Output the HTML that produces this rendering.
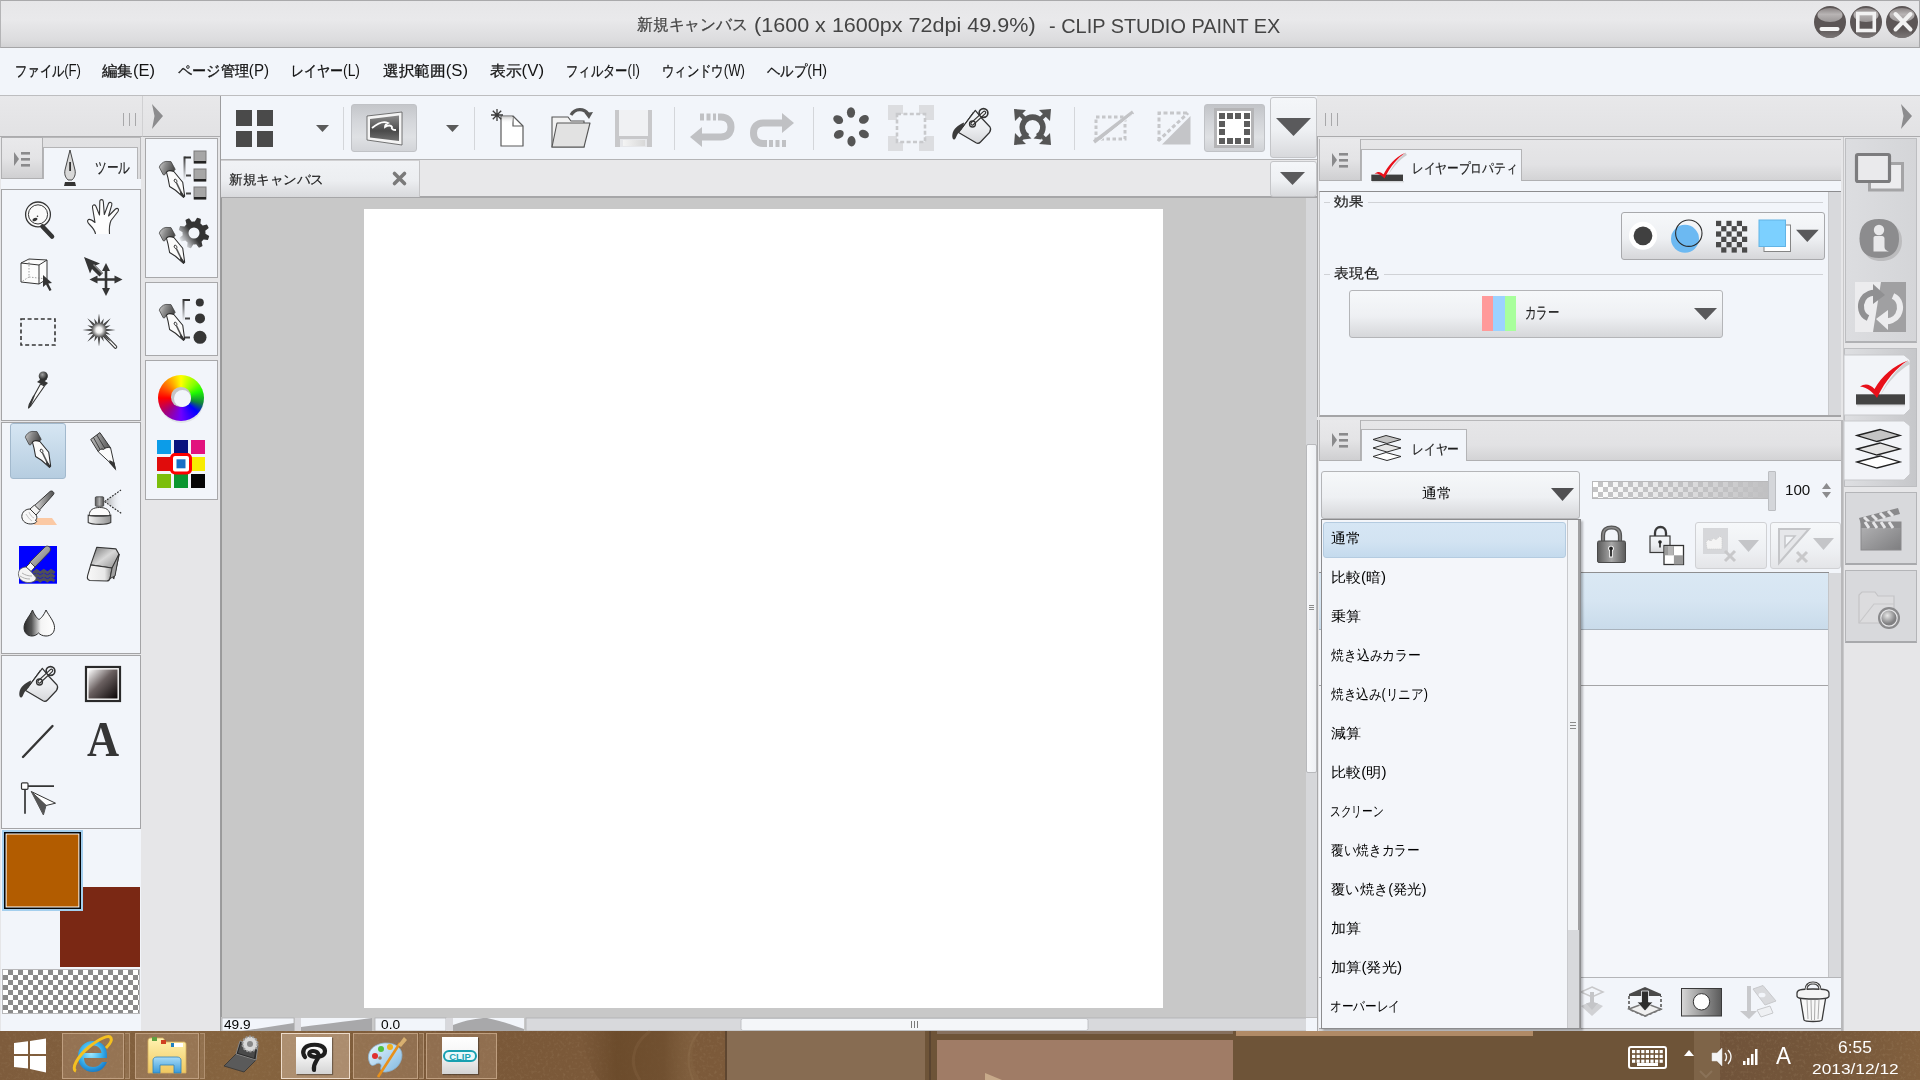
<!DOCTYPE html>
<html><head><meta charset="utf-8">
<style>
*{box-sizing:border-box;margin:0;padding:0}
html,body{width:1920px;height:1080px;overflow:hidden;background:#f2f5fa;font-family:"Liberation Sans",sans-serif;color:#1e1e1e;position:relative}
.a{position:absolute}
.t{white-space:pre}
.s{-webkit-text-stroke:.2px currentColor}
.j{font-size:.88em;line-height:0;-webkit-text-stroke:.3px currentColor}
svg{overflow:visible}
</style></head><body>
<svg width="0" height="0" style="position:absolute">
<defs>
<linearGradient id="gcap" x1="0" y1="0" x2="1" y2="0.3"><stop offset="0" stop-color="#d0d0d0"></stop><stop offset=".45" stop-color="#8a8a8a"></stop><stop offset="1" stop-color="#4a4a4a"></stop></linearGradient>
<linearGradient id="gbtn" x1="0" y1="0" x2="0" y2="1"><stop offset="0" stop-color="#f4f6f9"></stop><stop offset=".55" stop-color="#eceef1"></stop><stop offset="1" stop-color="#d6d7da"></stop></linearGradient>
<linearGradient id="glock" x1="0" y1="0" x2="1" y2="0"><stop offset="0" stop-color="#5a5a5a"></stop><stop offset=".5" stop-color="#a8a8a8"></stop><stop offset="1" stop-color="#5a5a5a"></stop></linearGradient>
<linearGradient id="gdark" x1="0" y1="0" x2="1" y2="0"><stop offset="0" stop-color="#e0e0e0"></stop><stop offset="1" stop-color="#505050"></stop></linearGradient>

</defs></svg>
<div class="a" style="left:0px;top:0px;width:1920px;height:48px;background:linear-gradient(#e6e6e8 0%,#e9e9eb 40%,#dcdcde 85%,#d2d2d4 100%);border-top:1px solid #a9a9ab;border-bottom:1px solid #a5a5a7;border-left:1px solid #b4b4b6;border-right:1px solid #a9a9ab"></div>
<div class="a t s" style="color: rgb(68, 68, 68); -webkit-text-stroke: 0.25px currentcolor; font-size: 15.94px; line-height: 15.94px; top: 16.96px; left: 637.34px; transform: scaleX(0.9875); transform-origin: 0px 0px; white-space: pre;">新規キャンバス</div>
<div class="a t" style="color: rgb(68, 68, 68); font-size: 19.89px; line-height: 19.89px; top: 15.78px; left: 754.31px; transform: scaleX(1.0844); transform-origin: 0px 0px; white-space: pre;">(1600 x 1600px 72dpi 49.9%)</div>
<div class="a t" style="color: rgb(68, 68, 68); font-size: 19.44px; line-height: 19.44px; top: 16.55px; left: 1049.2px; transform: scaleX(1.0248); transform-origin: 0px 0px; white-space: pre;">- CLIP STUDIO PAINT EX</div>
<svg class="a" style="left:1814px;top:6px;" width="32" height="32" viewBox="0 0 32 32"><defs><linearGradient id="gwb" x1="0" y1="0" x2="0" y2="1"><stop offset="0" stop-color="#8a8484"></stop><stop offset=".45" stop-color="#b8b4b4"></stop><stop offset="1" stop-color="#9a9696"></stop></linearGradient><linearGradient id="gwb2" x1="0" y1="0" x2="0" y2="1"><stop offset="0" stop-color="#5a5454"></stop><stop offset="1" stop-color="#8a8686"></stop></linearGradient></defs><circle cx="16" cy="16" r="16" fill="#5c5656"></circle><ellipse cx="16" cy="9" rx="12.5" ry="7" fill="url(#gwb)"></ellipse><ellipse cx="16" cy="27" rx="10" ry="5" fill="url(#gwb2)" opacity=".7"></ellipse><rect x="5.5" y="21" width="20" height="4" rx="2" fill="#f6f6f6"></rect></svg>
<svg class="a" style="left:1850px;top:6px;" width="32" height="32" viewBox="0 0 32 32"><defs><linearGradient id="gwb" x1="0" y1="0" x2="0" y2="1"><stop offset="0" stop-color="#8a8484"></stop><stop offset=".45" stop-color="#b8b4b4"></stop><stop offset="1" stop-color="#9a9696"></stop></linearGradient><linearGradient id="gwb2" x1="0" y1="0" x2="0" y2="1"><stop offset="0" stop-color="#5a5454"></stop><stop offset="1" stop-color="#8a8686"></stop></linearGradient></defs><circle cx="16" cy="16" r="16" fill="#5c5656"></circle><ellipse cx="16" cy="9" rx="12.5" ry="7" fill="url(#gwb)"></ellipse><ellipse cx="16" cy="27" rx="10" ry="5" fill="url(#gwb2)" opacity=".7"></ellipse><rect x="7.8" y="7.5" width="16.5" height="17" fill="none" stroke="#f2f2f2" stroke-width="3.6"></rect></svg>
<svg class="a" style="left:1886px;top:6px;" width="32" height="32" viewBox="0 0 32 32"><defs><linearGradient id="gwb" x1="0" y1="0" x2="0" y2="1"><stop offset="0" stop-color="#8a8484"></stop><stop offset=".45" stop-color="#b8b4b4"></stop><stop offset="1" stop-color="#9a9696"></stop></linearGradient><linearGradient id="gwb2" x1="0" y1="0" x2="0" y2="1"><stop offset="0" stop-color="#5a5454"></stop><stop offset="1" stop-color="#8a8686"></stop></linearGradient></defs><circle cx="16" cy="16" r="16" fill="#5c5656"></circle><ellipse cx="16" cy="9" rx="12.5" ry="7" fill="url(#gwb)"></ellipse><ellipse cx="16" cy="27" rx="10" ry="5" fill="url(#gwb2)" opacity=".7"></ellipse><path d="M9.5 8 L24.5 23.5 M24.5 8 L9.5 23.5" stroke="#f2f2f2" stroke-width="4" stroke-linecap="round"></path></svg>
<div class="a" style="left:0px;top:48px;width:1920px;height:48px;background:#f2f5fa;border-bottom:1px solid #bdbdbf"></div>
<div class="a t" style="left: 15px; top: 63.36px; font-size: 16px; line-height: 16px; color: rgb(20, 20, 20); display: inline-block; white-space: pre; transform: scaleX(0.8205); transform-origin: 0px 0px;"><span class="j" style="font-size:.91em">ファイル</span>(F)</div>
<div class="a t" style="left: 102px; top: 63.36px; font-size: 16px; line-height: 16px; color: rgb(20, 20, 20); display: inline-block; white-space: pre; transform: scaleX(1.0326); transform-origin: 0px 0px;"><span class="j" style="font-size:.91em">編集</span>(E)</div>
<div class="a t" style="left: 178px; top: 63.36px; font-size: 16px; line-height: 16px; color: rgb(20, 20, 20); display: inline-block; white-space: pre; transform: scaleX(0.9447); transform-origin: 0px 0px;"><span class="j" style="font-size:.91em">ページ管理</span>(P)</div>
<div class="a t" style="left: 291px; top: 63.36px; font-size: 16px; line-height: 16px; color: rgb(20, 20, 20); display: inline-block; white-space: pre; transform: scaleX(0.8672); transform-origin: 0px 0px;"><span class="j" style="font-size:.91em">レイヤー</span>(L)</div>
<div class="a t" style="left: 383px; top: 63.36px; font-size: 16px; line-height: 16px; color: rgb(20, 20, 20); display: inline-block; white-space: pre; transform: scaleX(1.0451); transform-origin: 0px 0px;"><span class="j" style="font-size:.91em">選択範囲</span>(S)</div>
<div class="a t" style="left: 490px; top: 63.36px; font-size: 16px; line-height: 16px; color: rgb(20, 20, 20); display: inline-block; white-space: pre; transform: scaleX(1.0521); transform-origin: 0px 0px;"><span class="j" style="font-size:.91em">表示</span>(V)</div>
<div class="a t" style="left: 566px; top: 63.36px; font-size: 16px; line-height: 16px; color: rgb(20, 20, 20); display: inline-block; white-space: pre; transform: scaleX(0.8212); transform-origin: 0px 0px;"><span class="j" style="font-size:.91em">フィルター</span>(I)</div>
<div class="a t" style="left: 662px; top: 63.36px; font-size: 16px; line-height: 16px; color: rgb(20, 20, 20); display: inline-block; white-space: pre; transform: scaleX(0.8237); transform-origin: 0px 0px;"><span class="j" style="font-size:.91em">ウィンドウ</span>(W)</div>
<div class="a t" style="left: 767px; top: 63.36px; font-size: 16px; line-height: 16px; color: rgb(20, 20, 20); display: inline-block; white-space: pre; transform: scaleX(0.8926); transform-origin: 0px 0px;"><span class="j" style="font-size:.91em">ヘルプ</span>(H)</div>
<div class="a" style="left:0px;top:96px;width:142px;height:41px;background:linear-gradient(#e8e8ea,#e2e2e4);border-bottom:1px solid #ababad"></div>
<div class="a" style="left:142px;top:96px;width:79px;height:41px;background:linear-gradient(#e8e8ea,#e2e2e4);border-bottom:1px solid #ababad;border-left:1px solid #d0d0d2"></div>
<div class="a" style="left:123px;top:113px;width:1px;height:13px;background:#a8a8aa"></div>
<div class="a" style="left:129px;top:113px;width:1px;height:13px;background:#a8a8aa"></div>
<div class="a" style="left:135px;top:113px;width:1px;height:13px;background:#a8a8aa"></div>
<svg class="a" style="left:152px;top:104px;" width="11" height="25" viewBox="0 0 11 25"><path d="M0 0 L11 12 L0 25 L2.5 12 Z" fill="#8c8c8e"></path></svg>
<div class="a" style="left:0px;top:137px;width:142px;height:894px;background:#e6e6e8"></div>
<div class="a" style="left:142px;top:137px;width:79px;height:894px;background:#e6e6e8"></div>
<div class="a" style="left:1px;top:137px;width:140px;height:42px;background:linear-gradient(#e2e2e4,#dcdcde);border:1px solid #b8b8ba;border-bottom:none"></div>
<div class="a" style="left:1px;top:137px;width:42px;height:42px;background:linear-gradient(#e9e9eb 0%,#e4e4e6 50%,#cfcfd1 100%);border:1px solid #b0b0b2"></div>
<svg class="a" style="left:14px;top:152px;" width="16" height="16" viewBox="0 0 16 16"><path d="M0 0 L5 7 L0 14 Z" fill="#8a8a8c"></path><rect x="7" y="0" width="9" height="2.6" fill="#8a8a8c"></rect><rect x="7" y="6" width="9" height="2.6" fill="#8a8a8c"></rect><rect x="7" y="12" width="9" height="2.6" fill="#8a8a8c"></rect></svg>
<div class="a" style="left:43px;top:147px;width:95px;height:42px;background:#f2f5fa;border:1px solid #b4b4b6;border-bottom:none"></div>
<div class="a" style="left:1px;top:179px;width:140px;height:10px;background:#f2f5fa"></div>
<div class="a" style="left:44px;top:178px;width:93px;height:3px;background:#f2f5fa"></div>
<svg class="a" style="left:63px;top:150px;" width="14" height="36" viewBox="0 0 14 36"><path d="M7 0 L12 20 C13 25 11 28 9 30 L5 30 C3 28 1 25 2 20 Z" fill="#d8d8d8" stroke="#333" stroke-width=".9"></path><rect x="6.2" y="12" width="1.8" height="9" fill="#333"></rect><path d="M1 36 L2 32 L12 32 L13 36 Z" fill="#333"></path></svg>
<div class="a t s" style="color: rgb(30, 30, 30); font-size: 16.1px; line-height: 16.1px; top: 158.92px; left: 94.99px; transform: scaleX(0.7301); transform-origin: 0px 0px; white-space: pre;">ツール</div>
<div class="a" style="left:1px;top:189px;width:140px;height:232px;background:#f2f5fa;border:1px solid #a4a4a6"></div>
<div class="a" style="left:1px;top:422px;width:140px;height:232px;background:#f2f5fa;border:1px solid #a4a4a6"></div>
<div class="a" style="left:1px;top:828px;width:140px;height:203px;background:#f2f5fa"></div>
<div class="a" style="left:1px;top:655px;width:140px;height:174px;background:#f2f5fa;border:1px solid #a4a4a6"></div>
<div class="a" style="left:10px;top:423px;width:56px;height:56px;background:linear-gradient(#d6e6f3,#b6cde0);border:1px solid #a2b9cd;border-radius:3px"></div>
<svg class="a" style="left:25px;top:431px" width="27" height="39" viewBox="0 0 28 40"><path d="M0.3 6.2 C1 3.5 4 0.6 7.1 0.2 L12.4 0.4 L16.8 8.4 L15.4 10.1 L11 9.6 L7.7 11.2 L5.7 14.3 L4.3 14 Z" fill="url(#gcap)" stroke="#404040" stroke-width=".8"></path>
 <path d="M7.7 11.2 C9 9.8 12 9.3 15.4 10.7 L24.6 21.8 L26.6 36.2 L25.4 37.6 L17.1 30.1 L11 26.2 L9.3 17.3 Z" fill="#fbfbfb" stroke="#2a2a2a" stroke-width="1.1" stroke-linejoin="round"></path>
 <ellipse cx="17.1" cy="20.3" rx="1.3" ry="1.8" transform="rotate(-25 17.1 20.3)" fill="none" stroke="#333" stroke-width=".9"></ellipse>
 <path d="M17.9 22 L24.6 35.6" stroke="#555" stroke-width="1.6"></path>
 <path d="M22.5 31 L26.6 36.2 L25.4 37.6 L21.8 33.5 Z" fill="#333"></path></svg>
<svg class="a" style="left:22px;top:198px;" width="36" height="42" viewBox="0 0 36 42"><circle cx="16" cy="16.4" r="12.4" fill="#fafafa" stroke="#353535" stroke-width="1.3"></circle><circle cx="16" cy="16.4" r="9.6" fill="none" stroke="#353535" stroke-width="1"></circle><ellipse cx="13" cy="21.5" rx="2.6" ry="1.6" transform="rotate(-20 13 21.5)" fill="#353535"></ellipse><circle cx="15.5" cy="18.3" r=".8" fill="#353535"></circle><path d="M20.5 28.5 L30 38.5" stroke="#353535" stroke-width="4.6" stroke-linecap="round"></path></svg>
<svg class="a" style="left:86px;top:198px;" width="38" height="38" viewBox="0 0 38 38"><path d="M9.5 36 C9 32 6 29 3.5 26.5 C1.5 24.5 0.8 22.5 2.5 21.5 C4 20.8 6 22 9 24.5 L6.5 9.5 C6 7 8.5 6 9.8 8 L13.5 17 L13.8 3.5 C13.8 1 17 1 17.3 3.5 L18.3 16.5 L22.5 5.5 C23.5 3.5 26.5 4.3 25.8 6.8 L22.5 18 L29.5 11 C31.5 9.5 33.5 11 32 13.5 L25 22.5 C23.5 26 23 30 23.5 36" fill="#fdfdfd" stroke="#353535" stroke-width="1.1" stroke-linejoin="round"></path></svg>
<svg class="a" style="left:20px;top:258px;" width="36" height="34" viewBox="0 0 36 34"><path d="M1 5 L9 1 L27 2 L27 21 L19 26 L1 24 Z" fill="#fcfcfc" stroke="#353535" stroke-width="1"></path><path d="M1 5 L19 7 L27 2 M19 7 L19 26" fill="none" stroke="#353535" stroke-width="1"></path><path d="M9 1 L9 19 L1 24 M9 19 L27 21" fill="none" stroke="#777" stroke-width=".7" stroke-dasharray="1.5 1.5"></path><path d="M23 17 L23 29 L26 26.5 L29.5 33 L31.5 32 L28.3 25.5 L32 25 Z" fill="#353535"></path></svg>
<svg class="a" style="left:83px;top:256px;" width="40" height="40" viewBox="0 0 40 40"><path d="M1 1 L17 7.5 L12.5 9.5 L20 17 L16.5 20.5 L9 13 L7 17.5 Z" fill="#353535"></path><path d="M10.5 8.5 L19.5 17.5" stroke="#8a8a8a" stroke-width="1.4"></path><path d="M23 7 L27 15 L24.3 15 L24.3 22.3 L31.5 22.3 L31.5 19.5 L39.5 23.5 L31.5 27.5 L31.5 24.7 L24.3 24.7 L24.3 32 L27 32 L23 40 L19 32 L21.7 32 L21.7 24.7 L14.5 24.7 L14.5 27.5 L6.5 23.5 L14.5 19.5 L14.5 22.3 L21.7 22.3 L21.7 15 L19 15 Z" fill="#353535"></path></svg>
<svg class="a" style="left:20px;top:318px;" width="36" height="28" viewBox="0 0 36 28"><rect x="1" y="1" width="34" height="26" fill="none" stroke="#353535" stroke-width="1.6" stroke-dasharray="4 2.6"></rect></svg>
<svg class="a" style="left:83px;top:313.5px;" width="40" height="40" viewBox="0 0 40 40"><defs><radialGradient id="gstar"><stop offset="0" stop-color="#fff"></stop><stop offset=".18" stop-color="#f0f0f0"></stop><stop offset=".45" stop-color="#505050"></stop><stop offset="1" stop-color="#2a2a2a"></stop></radialGradient></defs><path d="M18 18 L32.5 33" stroke="#353535" stroke-width="3.6" stroke-linecap="round"></path><path d="M18 18 L32.5 33" stroke="#fafafa" stroke-width="1.6" stroke-linecap="round"></path><polygon points="16.00,-0.50 17.33,9.33 20.78,4.45 19.78,10.35 27.67,4.33 21.65,12.22 27.55,11.22 22.67,14.67 32.50,16.00 22.67,17.33 27.55,20.78 21.65,19.78 27.67,27.67 19.78,21.65 20.78,27.55 17.33,22.67 16.00,32.50 14.67,22.67 11.22,27.55 12.22,21.65 4.33,27.67 10.35,19.78 4.45,20.78 9.33,17.33 -0.50,16.00 9.33,14.67 4.45,11.22 10.35,12.22 4.33,4.33 12.22,10.35 11.22,4.45 14.67,9.33" fill="url(#gstar)"></polygon></svg>
<svg class="a" style="left:26px;top:370px;" width="26" height="40" viewBox="0 0 26 40"><defs><radialGradient id="gbulb" cx=".4" cy=".35"><stop offset="0" stop-color="#a0a0a0"></stop><stop offset="1" stop-color="#303030"></stop></radialGradient></defs><path d="M14.5 14 L18.5 16 L5 35.5 L2.5 38 L3.2 34.5 Z" fill="#fafafa" stroke="#353535" stroke-width="1.1" stroke-linejoin="round"></path><path d="M9 25 L5 35.5 L2.5 38 L3.2 34.5 L7 26 Z" fill="#353535"></path><path d="M11 12 L15 9 L22 13 L19 16 Z" fill="#353535"></path><path d="M13.5 9.5 L17.5 6.5 L21 9 L17.5 12.5 Z" fill="#353535"></path><circle cx="17.3" cy="6" r="4.6" fill="url(#gbulb)"></circle></svg>
<svg class="a" style="left:80px;top:425px;" width="50" height="50" viewBox="0 0 50 50"><defs><linearGradient id="gpb" x1="0" y1="0" x2="1" y2="0"><stop offset="0" stop-color="#b8b8b8"></stop><stop offset=".5" stop-color="#8a8a8a"></stop><stop offset="1" stop-color="#505050"></stop></linearGradient></defs><path d="M10.7 14.5 L19.9 7.6 L30.6 22.9 C28 22 25.5 22.5 23.5 24.5 C21.5 23.5 19.5 24.5 18.3 26.8 Z" fill="url(#gpb)" stroke="#353535" stroke-width="1"></path><path d="M13.5 12.5 L20.5 25.3 M16.8 10 L25 23.5" stroke="#353535" stroke-width=".9"></path><path d="M18.3 26.8 C19.5 24.5 21.5 23.5 23.5 24.5 C25.5 22.5 28 22 30.6 22.9 L35.2 43.6 L29.8 37.5 Z" fill="#fbfbfb" stroke="#353535" stroke-width="1" stroke-linejoin="round"></path><path d="M30 36 L34 38 L35.2 43.6 L29.8 37.5 Z" fill="#353535" stroke="#353535" stroke-width="1.2"></path></svg>
<svg class="a" style="left:20px;top:490px;" width="40" height="36" viewBox="0 0 40 36"><path d="M17 28 L32 28 L37 35 L14 35 Z" fill="#fbc9a4"></path><path d="M14 16 L30 1.5 C32 0 35 2.5 33.5 4.5 L19.5 20 Z" fill="url(#gdark)" stroke="#353535" stroke-width="1"></path><path d="M10 19 L14.5 15 L20 20.5 L16 25 Z" fill="#f4f4f4" stroke="#353535" stroke-width="1"></path><path d="M10 19 C4 19 1 24 2 28 C3 33 9 35 14 33.5 C17 32.5 17.5 30.5 15.5 30.5 C17.5 28 17 26 16 25 Z" fill="#f8f8f8" stroke="#353535" stroke-width="1"></path><path d="M6 24 C8 27 9 29 12 31 M9 22 C10 25 12 27 14 28" stroke="#aaa" stroke-width=".7" fill="none"></path></svg>
<svg class="a" style="left:80px;top:480px;" width="50" height="55" viewBox="0 0 50 55"><defs><linearGradient id="gspray" x1="0" x2="1"><stop offset="0" stop-color="#707070"></stop><stop offset="1" stop-color="#f2f5fa" stop-opacity="0"></stop></linearGradient><linearGradient id="gnoz" x1="0" x2="1"><stop offset="0" stop-color="#5a5a5a"></stop><stop offset=".5" stop-color="#b0b0b0"></stop><stop offset="1" stop-color="#4a4a4a"></stop></linearGradient><linearGradient id="gbase" x1="0" x2="1"><stop offset="0" stop-color="#f4f4f4"></stop><stop offset="1" stop-color="#909090"></stop></linearGradient></defs><path d="M24.5 21.6 L41 10 L41.5 33.5 Z" fill="url(#gspray)" opacity=".7"></path><path d="M24.5 21.6 L41 10 M24.5 21.6 L41.5 33.5" stroke="#2a2a2a" stroke-width="1.1" stroke-dasharray="1.8 1.3"></path><rect x="15.3" y="16.8" width="8.4" height="9.5" rx="1" fill="url(#gnoz)" stroke="#3a3a3a" stroke-width=".8"></rect><path d="M9.2 35.6 C9.2 30 13 27.5 19.6 27.5 C26 27.5 30 30 30 35.6 Z" fill="#fbfbfb" stroke="#3a3a3a" stroke-width="1"></path><path d="M8.2 35.2 C12 36.5 27 36.5 30.8 35.2 L30.8 42.5 C27 45 12 45 8.2 42.5 Z" fill="url(#gbase)" stroke="#3a3a3a" stroke-width="1.1"></path></svg>
<svg class="a" style="left:15px;top:540px;" width="50" height="50" viewBox="0 0 50 50"><defs><linearGradient id="gbh" x1="0" y1="0" x2="1" y2="1"><stop offset="0" stop-color="#d8d8d8"></stop><stop offset="1" stop-color="#6a6a6a"></stop></linearGradient></defs><rect x="4" y="6" width="38" height="37.7" fill="#0000ff"></rect><polyline points="18.0,33 21.6,30.4 25.2,33 28.8,30.4 32.4,33 36.0,30.4 39.6,33" fill="none" stroke="#4e4e5a" stroke-width="2.8"></polyline><polyline points="18.0,37 21.6,34.4 25.2,37 28.8,34.4 32.4,37 36.0,34.4 39.6,37" fill="none" stroke="#4e4e5a" stroke-width="2.8"></polyline><polyline points="18.0,41 21.6,38.4 25.2,41 28.8,38.4 32.4,41 36.0,38.4 39.6,41" fill="none" stroke="#4e4e5a" stroke-width="2.8"></polyline><path d="M14 23 L30 7 C31.5 5.5 34 6 35 7.5 C36 9 35.5 11 34 12.5 L19 28 Z" fill="url(#gbh)" stroke="#333" stroke-width=".8"></path><path d="M11 27 L15.5 22.5 L20 27 L16 31.5 Z" fill="#f6f6f6" stroke="#333" stroke-width=".9"></path><path d="M11 27 C5 27.5 3 31 3.5 35 C4 40 9 43 15 42.5 C19 42 21.5 40 21 37.5 L16 31.5 Z" fill="#f4f4f4" stroke="#555" stroke-width=".8"></path><path d="M5 36 C8 38 11 39 15 39 M7 33 C10 35 13 36 17 36" stroke="#b0b0b0" stroke-width="1" fill="none"></path></svg>
<svg class="a" style="left:80px;top:540px;" width="50" height="50" viewBox="0 0 50 50"><defs><linearGradient id="gert" x1="0" y1="0" x2="1" y2="1"><stop offset="0" stop-color="#707070"></stop><stop offset=".5" stop-color="#d8d8d8"></stop><stop offset="1" stop-color="#8a8a8a"></stop></linearGradient><linearGradient id="gerf" x1="0" y1="0" x2="1" y2="0"><stop offset="0" stop-color="#f8f8f8"></stop><stop offset=".7" stop-color="#e8e8e8"></stop><stop offset="1" stop-color="#909090"></stop></linearGradient></defs><path d="M16.8 7.3 L35.9 8.9 L39 14.2 L32.1 28 L10.7 24.9 Z" fill="url(#gert)" stroke="#353535" stroke-width="1.1" stroke-linejoin="round"></path><path d="M10.7 25 L7.6 35.6 C7 38 8 40 10 40.5 L26.8 41 C28.5 41 29.5 40 30 38.5 L32.1 28 Z" fill="url(#gerf)" stroke="#353535" stroke-width="1.1" stroke-linejoin="round"></path><path d="M39 14.2 L33.5 39" stroke="#353535" stroke-width="1.6"></path><path d="M32.1 28 L39 14.2 L35 36 L30 38.5 Z" fill="#a0a0a0" stroke="#353535" stroke-width="1"></path></svg>
<svg class="a" style="left:22.5px;top:608.5px;" width="34" height="29" viewBox="0 0 34 29"><defs><linearGradient id="gdrop" x1="0" x2="1"><stop offset="0" stop-color="#2a2a2a"></stop><stop offset=".25" stop-color="#555"></stop><stop offset=".55" stop-color="#f4f4f4"></stop><stop offset="1" stop-color="#fff"></stop></linearGradient></defs><path d="M9.5 1 C7 7 1 12.5 1 18.5 C1 24 4.5 27 9 27 C12 27 14 25.5 15.5 24 C17 25.5 19.5 27 23 27 C28 27 31.5 24 31.5 18.5 C31.5 12.5 26 7 23 1 C21 6 18 9.5 16 10.5 C14 9.5 11.5 6 9.5 1 Z" fill="url(#gdrop)" stroke="#2a2a2a" stroke-width="1"></path></svg>
<svg class="a" style="left:15px;top:660px;" width="50" height="50" viewBox="0 0 50 50"><path d="M27.3 8.3 L34 16.5 L42 25 C43 26.5 42.8 28.5 41.5 30.5 L32.5 40 C31.3 41.3 29.7 41.7 28 40.8 L10.6 30.5 Z" fill="url(#gbtn)" stroke="#333" stroke-width="1.2" stroke-linejoin="round"></path><path d="M25.5 10 L12.5 28" stroke="#333" stroke-width="1"></path><path d="M16 20.5 C10 23 5 27 4.3 33 C4 36 5 38 6.5 37.5 C8 37 8.5 33 10.5 30.8 L15.5 24.5 Z" fill="#3a3a3a"></path><path d="M24.3 21.7 L36.3 10.6" stroke="#333" stroke-width="4" stroke-linecap="round"></path><path d="M24.3 21.7 L36.3 10.6" stroke="#f4f4f4" stroke-width="1.6" stroke-linecap="round"></path><circle cx="35.5" cy="11" r="4.4" fill="none" stroke="#333" stroke-width="1.6"></circle><circle cx="24.5" cy="22" r="3" fill="none" stroke="#333" stroke-width="1.3"></circle></svg>
<svg class="a" style="left:85px;top:666px;" width="36" height="36" viewBox="0 0 36 36"><defs><linearGradient id="ggrad" x1="0" y1="0" x2="1" y2="1"><stop offset="0" stop-color="#fff"></stop><stop offset=".45" stop-color="#6a6060"></stop><stop offset="1" stop-color="#0a0505"></stop></linearGradient></defs><rect x="1" y="1" width="34" height="34" fill="#fff" stroke="#2a2a2a" stroke-width="2.2"></rect><rect x="3.5" y="3.5" width="29" height="29" fill="url(#ggrad)"></rect></svg>
<svg class="a" style="left:21px;top:724px;" width="34" height="35" viewBox="0 0 34 35"><path d="M2 33 L31.5 2" stroke="#353535" stroke-width="2.4" stroke-linecap="round"></path></svg>
<div class="a t" style="font-family: &quot;Liberation Serif&quot;, serif; font-weight: bold; color: rgb(53, 53, 53); font-size: 50px; line-height: 50px; top: 713.67px; left: 87px; transform: scaleX(0.8889); transform-origin: 0px 0px; white-space: pre;">A</div>
<svg class="a" style="left:20px;top:781px;" width="38" height="36" viewBox="0 0 38 36"><rect x="1.5" y="1.8" width="6.5" height="6.5" rx="1" fill="#fff" stroke="#353535" stroke-width="1.2"></rect><path d="M8 5.2 L34 5.2 M5 8.3 L5 32.7" stroke="#353535" stroke-width="1.7"></path><path d="M11.25 10.5 L35.5 22.2 L26 24.5 Z" fill="#fff" stroke="#353535" stroke-width="1"></path><path d="M11.25 10.5 L26 24.5 L23.4 34 Z" fill="#555" stroke="#555" stroke-width="1"></path></svg>
<div class="a" style="left:145px;top:138px;width:73px;height:140px;background:#f2f5fa;border:1px solid #a8a8aa"></div>
<div class="a" style="left:145px;top:282px;width:73px;height:74px;background:#f2f5fa;border:1px solid #a8a8aa"></div>
<div class="a" style="left:145px;top:360px;width:73px;height:140px;background:#f2f5fa;border:1px solid #a8a8aa"></div>
<div class="a" style="left:220px;top:96px;width:1px;height:936px;background:#9c9c9e"></div>
<svg class="a" style="left:159px;top:161px" width="27" height="39" viewBox="0 0 28 40"><path d="M0.3 6.2 C1 3.5 4 0.6 7.1 0.2 L12.4 0.4 L16.8 8.4 L15.4 10.1 L11 9.6 L7.7 11.2 L5.7 14.3 L4.3 14 Z" fill="url(#gcap)" stroke="#404040" stroke-width=".8"></path>
 <path d="M7.7 11.2 C9 9.8 12 9.3 15.4 10.7 L24.6 21.8 L26.6 36.2 L25.4 37.6 L17.1 30.1 L11 26.2 L9.3 17.3 Z" fill="#fbfbfb" stroke="#2a2a2a" stroke-width="1.1" stroke-linejoin="round"></path>
 <ellipse cx="17.1" cy="20.3" rx="1.3" ry="1.8" transform="rotate(-25 17.1 20.3)" fill="none" stroke="#333" stroke-width=".9"></ellipse>
 <path d="M17.9 22 L24.6 35.6" stroke="#555" stroke-width="1.6"></path>
 <path d="M22.5 31 L26.6 36.2 L25.4 37.6 L21.8 33.5 Z" fill="#333"></path></svg>
<svg class="a" style="left:178px;top:146px;" width="30" height="56" viewBox="0 0 30 56"><rect x="16" y="5" width="12" height="12" fill="#a6a6a6" stroke="#7a7a7a" stroke-width="1"></rect><rect x="16" y="15" width="12" height="2.4" fill="#222"></rect><rect x="16" y="23" width="12" height="12" fill="#a6a6a6" stroke="#7a7a7a" stroke-width="1"></rect><rect x="16" y="33" width="12" height="2.4" fill="#222"></rect><rect x="16" y="41" width="12" height="12" fill="#a6a6a6" stroke="#7a7a7a" stroke-width="1"></rect><rect x="16" y="51" width="12" height="2.4" fill="#222"></rect><defs><linearGradient id="gbr" x1="0" y1="0" x2="0" y2="1"><stop offset="0" stop-color="#333"></stop><stop offset="1" stop-color="#333" stop-opacity="0"></stop></linearGradient></defs><path d="M13 11.5 L6.5 11.5" stroke="#333" stroke-width="2" fill="none"></path><rect x="5.5" y="10.5" width="2" height="24" fill="url(#gbr)"></rect><path d="M8 29.5 L13 29.5 M8 47.5 L13 47.5" stroke="#444" stroke-width="2"></path></svg>
<svg class="a" style="left:159px;top:227px" width="27" height="39" viewBox="0 0 28 40"><path d="M0.3 6.2 C1 3.5 4 0.6 7.1 0.2 L12.4 0.4 L16.8 8.4 L15.4 10.1 L11 9.6 L7.7 11.2 L5.7 14.3 L4.3 14 Z" fill="url(#gcap)" stroke="#404040" stroke-width=".8"></path>
 <path d="M7.7 11.2 C9 9.8 12 9.3 15.4 10.7 L24.6 21.8 L26.6 36.2 L25.4 37.6 L17.1 30.1 L11 26.2 L9.3 17.3 Z" fill="#fbfbfb" stroke="#2a2a2a" stroke-width="1.1" stroke-linejoin="round"></path>
 <ellipse cx="17.1" cy="20.3" rx="1.3" ry="1.8" transform="rotate(-25 17.1 20.3)" fill="none" stroke="#333" stroke-width=".9"></ellipse>
 <path d="M17.9 22 L24.6 35.6" stroke="#555" stroke-width="1.6"></path>
 <path d="M22.5 31 L26.6 36.2 L25.4 37.6 L21.8 33.5 Z" fill="#333"></path></svg>
<svg class="a" style="left:177.5px;top:217px;" width="32" height="32" viewBox="0 0 32 32"><defs><linearGradient id="ggear" x1=".05" y1=".8" x2=".55" y2=".45"><stop offset="0" stop-color="#f2f5fa"></stop><stop offset=".8" stop-color="#3a3a3a"></stop><stop offset="1" stop-color="#333"></stop></linearGradient></defs><polygon points="31.19,19.08 30.66,21.04 29.88,22.91 25.54,22.42 24.62,23.61 23.55,24.67 24.56,28.92 22.80,29.93 20.93,30.70 18.20,27.29 16.71,27.48 15.21,27.47 12.92,31.19 10.96,30.66 9.09,29.88 9.58,25.54 8.39,24.62 7.33,23.55 3.08,24.56 2.07,22.80 1.30,20.93 4.71,18.20 4.52,16.71 4.53,15.21 0.81,12.92 1.34,10.96 2.12,9.09 6.46,9.58 7.38,8.39 8.45,7.33 7.44,3.08 9.20,2.07 11.07,1.30 13.80,4.71 15.29,4.52 16.79,4.53 19.08,0.81 21.04,1.34 22.91,2.12 22.42,6.46 23.61,7.38 24.67,8.45 28.92,7.44 29.93,9.20 30.70,11.07 27.29,13.80 27.48,15.29 27.47,16.79" fill="url(#ggear)"></polygon><circle cx="16" cy="16" r="5.5" fill="#f2f5fa"></circle></svg>
<svg class="a" style="left:159px;top:304px" width="27" height="39" viewBox="0 0 28 40"><path d="M0.3 6.2 C1 3.5 4 0.6 7.1 0.2 L12.4 0.4 L16.8 8.4 L15.4 10.1 L11 9.6 L7.7 11.2 L5.7 14.3 L4.3 14 Z" fill="url(#gcap)" stroke="#404040" stroke-width=".8"></path>
 <path d="M7.7 11.2 C9 9.8 12 9.3 15.4 10.7 L24.6 21.8 L26.6 36.2 L25.4 37.6 L17.1 30.1 L11 26.2 L9.3 17.3 Z" fill="#fbfbfb" stroke="#2a2a2a" stroke-width="1.1" stroke-linejoin="round"></path>
 <ellipse cx="17.1" cy="20.3" rx="1.3" ry="1.8" transform="rotate(-25 17.1 20.3)" fill="none" stroke="#333" stroke-width=".9"></ellipse>
 <path d="M17.9 22 L24.6 35.6" stroke="#555" stroke-width="1.6"></path>
 <path d="M22.5 31 L26.6 36.2 L25.4 37.6 L21.8 33.5 Z" fill="#333"></path></svg>
<svg class="a" style="left:180px;top:296px;" width="30" height="48" viewBox="0 0 30 48"><path d="M10 4 L3.5 4" stroke="#333" stroke-width="2" fill="none"></path><rect x="2.5" y="3" width="2" height="22" fill="url(#gbr)"></rect><path d="M5 22.5 L10 22.5 M5 41.5 L10 41.5" stroke="#444" stroke-width="2"></path><circle cx="19.8" cy="6.6" r="4" fill="#353535"></circle><circle cx="20" cy="22.4" r="5" fill="#353535"></circle><circle cx="20" cy="41.3" r="6.5" fill="#353535"></circle></svg>
<div class="a" style="left:159px;top:378px;width:45px;height:45px;border-radius:50%;background:rgba(0,0,0,.07)"></div>
<div class="a" style="left:158px;top:375px;width:46px;height:46px;border-radius:50%;background:conic-gradient(#ffff00 0deg,#82ff00 45deg,#1efa00 70deg,#108040 105deg,#0000ff 130deg,#7000ff 180deg,#a00080 225deg,#ff0000 270deg,#ff8000 315deg,#ffff00 360deg)"></div>
<div class="a" style="left:171px;top:387px;width:19.6px;height:19.6px;border-radius:50%;background:#c4c4c6"></div>
<div class="a" style="left:173.6px;top:389.6px;width:17.2px;height:17.2px;border-radius:50%;background:#f2f5fa"></div>
<svg class="a" style="left:157px;top:440px;" width="48" height="48" viewBox="0 0 48 48"><rect x="0" y="0" width="14" height="14" fill="#0c9ce8"></rect><rect x="17" y="0" width="14" height="14" fill="#0a127e"></rect><rect x="34" y="0" width="14" height="14" fill="#e2127e"></rect><rect x="0" y="17" width="14" height="14" fill="#e00c0c"></rect><rect x="34" y="17" width="14" height="14" fill="#f8ec00"></rect><rect x="0" y="34" width="14" height="14" fill="#7cbe0c"></rect><rect x="17" y="34" width="14" height="14" fill="#0a9630"></rect><rect x="34" y="34" width="14" height="14" fill="#050505"></rect><rect x="14.5" y="14.5" width="19" height="18.5" rx="3.5" fill="#fff" stroke="#f00" stroke-width="3"></rect><rect x="19.5" y="19.3" width="9" height="9" fill="#1a6ec4"></rect></svg>
<div class="a" style="left:60px;top:887px;width:80px;height:80px;background:#7a2814"></div>
<div class="a" style="left:2px;top:830px;width:81px;height:81px;background:#b25c00;border:2px solid #a4cfee;box-shadow:inset 0 0 0 1.6px #050505,inset 0 0 0 2.6px #fff"></div>
<div class="a" style="left:2px;top:969px;width:138px;height:45px;border:1px solid #b8b8ba;background-color:#fff;background-image:linear-gradient(45deg,#8a8a8a 25%,transparent 25%,transparent 75%,#8a8a8a 75%),linear-gradient(45deg,#8a8a8a 25%,transparent 25%,transparent 75%,#8a8a8a 75%);background-size:10px 10px;background-position:0 0,5px 5px"></div>
<div class="a" style="left:221px;top:96px;width:1096px;height:64px;background:#f2f5fa;border-bottom:1px solid #b4b4b6"></div>
<div class="a" style="left:221px;top:160px;width:1096px;height:38px;background:#e8e8ea;border-bottom:2px solid #a6a6a8"></div>
<div class="a" style="left:221px;top:160px;width:199px;height:37px;background:linear-gradient(#f0f2f5 0%,#eceef1 55%,#d8d9dc 100%);border-right:1px solid #c4c4c6;border-top:1px solid #d0d0d2"></div>
<div class="a t s" style="color: rgb(30, 30, 30); font-size: 13.37px; line-height: 13.37px; top: 173.05px; left: 228.86px; transform: scaleX(1.0442); transform-origin: 0px 0px; white-space: pre;">新規キャンバス</div>
<svg class="a" style="left:392px;top:171px;" width="15" height="15" viewBox="0 0 15 15"><path d="M2.5 2.5 L12.5 12.5 M12.5 2.5 L2.5 12.5" stroke="#7a7a7a" stroke-width="3.6" stroke-linecap="round"></path></svg>
<div class="a" style="left:221px;top:198px;width:1085px;height:820px;background:#c8c8c8;border-left:1px solid #9a9a9a"></div>
<div class="a" style="left:364px;top:209px;width:799px;height:799px;background:#ffffff"></div>
<div class="a" style="left:1306px;top:198px;width:11px;height:820px;background:#d6d7da"></div>
<div class="a" style="left:1306px;top:444px;width:11px;height:329px;background:linear-gradient(90deg,#f8f9fb,#eef0f4);border:1px solid #b8b9bc;border-radius:2px"></div>
<div class="a" style="left:1309px;top:605px;width:5px;height:1px;background:#8a8a8a"></div>
<div class="a" style="left:1309px;top:607px;width:5px;height:1px;background:#8a8a8a"></div>
<div class="a" style="left:1309px;top:609px;width:5px;height:1px;background:#8a8a8a"></div>
<div class="a" style="left:1317px;top:198px;width:2px;height:834px;background:#eef0f4"></div>
<div class="a" style="left:221px;top:1017px;width:1096px;height:14px;background:#c8c8c8"></div>
<svg class="a" style="left:222px;top:1017px" width="1095" height="14" viewBox="0 0 1095 14">
<rect x="0" y="1" width="72" height="13" fill="#f2f5fa" stroke="#b0b0b2" stroke-width=".8"></rect>
<path d="M20 14 L72 6 L72 14 Z" fill="#a8a8aa"></path>
<rect x="73" y="1" width="6" height="13" fill="#d8d8dc"></rect>
<rect x="79" y="1" width="71" height="13" fill="#f2f5fa"></rect>
<path d="M79 10 C110 6 135 3 150 1 L150 14 L79 14 Z" fill="#a8a8aa"></path>
<rect x="153" y="1" width="71" height="13" fill="#f2f5fa" stroke="#b0b0b2" stroke-width=".8"></rect>
<path d="M153 14 C170 12 180 10 190 9 C200 12 210 14 224 14 Z" fill="#a8a8aa" opacity="0"></path>
<rect x="224" y="1" width="7" height="13" fill="#d8d8dc"></rect>
<rect x="231" y="1" width="71" height="13" fill="#f2f5fa"></rect>
<path d="M231 8 C245 3 255 1 265 1 C280 4 290 8 302 12 L302 14 L231 14 Z" fill="#a8a8aa"></path>
<rect x="304" y="1" width="791" height="13" fill="#d8d9dc" stroke="#b0b0b2" stroke-width=".8"></rect>
<rect x="519" y="1.5" width="347" height="12" rx="2" fill="#f4f6f9" stroke="#b8b9bc" stroke-width=".8"></rect>
<rect x="689" y="4" width="1" height="7" fill="#7a7a7a"></rect><rect x="692" y="4" width="1" height="7" fill="#7a7a7a"></rect><rect x="695" y="4" width="1" height="7" fill="#7a7a7a"></rect>
<rect x="1084" y="1" width="11" height="13" fill="#f2f5fa"></rect>
</svg>
<div class="a t" style="color: rgb(0, 0, 0); font-size: 13.24px; line-height: 13.24px; top: 1018.06px; left: 224.33px; transform: scaleX(1.0325); transform-origin: 0px 0px; white-space: pre;">49.9</div>
<div class="a t" style="color: rgb(0, 0, 0); font-size: 13.24px; line-height: 13.24px; top: 1018.06px; left: 381.19px; transform: scaleX(1.0383); transform-origin: 0px 0px; white-space: pre;">0.0</div>
<div class="a" style="left:236px;top:110px;width:16px;height:16px;background:#4a4a4a"></div>
<div class="a" style="left:257px;top:110px;width:16px;height:16px;background:#4a4a4a"></div>
<div class="a" style="left:236px;top:131px;width:16px;height:16px;background:#4a4a4a"></div>
<div class="a" style="left:257px;top:131px;width:16px;height:16px;background:#4a4a4a"></div>
<svg class="a" style="left:316px;top:125px;" width="13" height="7" viewBox="0 0 13 7"><path d="M0 0 L13 0 L6.5 7 Z" fill="#5a5a5a"></path></svg>
<div class="a" style="left:343px;top:107px;width:1px;height:43px;background:#d4d6da"></div>
<div class="a" style="left:351px;top:104px;width:66px;height:48px;background:linear-gradient(#c4c6ca 0%,#d4d6da 35%,#dfe1e4 70%,#d2d4d8 100%);border:1px solid #c0c2c6;border-radius:3px"></div>
<svg class="a" style="left:366px;top:111px;" width="37" height="35" viewBox="0 0 37 35"><defs><linearGradient id="gcv" x1="0" y1="0" x2="0" y2="1"><stop offset="0" stop-color="#8a8a8a"></stop><stop offset=".6" stop-color="#4a4a4a"></stop><stop offset="1" stop-color="#707070"></stop></linearGradient></defs><path d="M1 5 L36 1 L36 34 L1 29 Z" fill="#f4f4f4" stroke="#555" stroke-width=".8"></path><path d="M4 8 L33 4.5 L33 30 L4 26.5 Z" fill="url(#gcv)"></path><path d="M6 17 C12 12 18 10 22 12 C20 13 19 14 19 16 C22 14 25 14 26 16 C25 18 27 19 30 19" stroke="#fff" stroke-width="1.8" fill="none"></path></svg>
<svg class="a" style="left:446px;top:125px;" width="13" height="7" viewBox="0 0 13 7"><path d="M0 0 L13 0 L6.5 7 Z" fill="#5a5a5a"></path></svg>
<div class="a" style="left:474px;top:107px;width:1px;height:43px;background:#d4d6da"></div>
<svg class="a" style="left:491px;top:109px;" width="35" height="38" viewBox="0 0 35 38"><path d="M10 7 L22 7 L32 17 L32 37 L10 37 Z" fill="#fff" stroke="#5a5a5a" stroke-width="1.2" stroke-linejoin="round"></path><path d="M22 7 L22 17 L32 17" fill="none" stroke="#5a5a5a" stroke-width="1.2"></path><path d="M6 0 L6 12 M0 6 L12 6 M1.8 1.8 L10.2 10.2 M10.2 1.8 L1.8 10.2" stroke="#3a3a3a" stroke-width="1.3"></path><defs><linearGradient id="gnf" x1="0" y1="0" x2="0" y2="1"><stop offset="0" stop-color="#d0d0d0"></stop><stop offset="1" stop-color="#fff" stop-opacity="0"></stop></linearGradient></defs><rect x="11" y="8" width="11" height="6" fill="url(#gnf)"></rect></svg>
<svg class="a" style="left:551px;top:109px;" width="43" height="39" viewBox="0 0 43 39"><path d="M1 8 L17 8 L20 12 L33 12 L33 38 L1 38 Z" fill="#f2f2f2" stroke="#555" stroke-width="1.1"></path><path d="M1 38 L6 14 L39 14 L33 38 Z" fill="#e2e2e2" stroke="#555" stroke-width="1.1" stroke-linejoin="round"></path><path d="M20 6 C24 -1 33 -1 37 5" stroke="#555" stroke-width="3.2" fill="none"></path><path d="M33.5 4 L42 3 L38 10 Z" fill="#555"></path></svg>
<svg class="a" style="left:614px;top:109px;" width="39" height="38" viewBox="0 0 39 38"><rect x="1" y="1" width="37" height="37" fill="#c8c8ca"></rect><rect x="5" y="1" width="29" height="26" fill="#f0f1f3"></rect><rect x="6" y="30" width="27" height="8" fill="#e6e7ea"></rect><defs><linearGradient id="gsv" x1="0" x2="1"><stop offset="0" stop-color="#f4f4f4"></stop><stop offset="1" stop-color="#d8d8d8"></stop></linearGradient></defs><rect x="9" y="31" width="22" height="6" fill="url(#gsv)"></rect></svg>
<div class="a" style="left:674px;top:107px;width:1px;height:43px;background:#d4d6da"></div>
<svg class="a" style="left:690px;top:113px;" width="44" height="35" viewBox="0 0 44 35"><path d="M10 24 L31 24 C37 24 41 20 41 14 C41 8 37 4 31 4 L28 4" stroke="#c0c1c4" stroke-width="7" fill="none"></path><path d="M0 24 L12 14 L12 34 Z" fill="#c0c1c4"></path><path d="M10 4 L26 4" stroke="#c0c1c4" stroke-width="7" stroke-dasharray="4 2.5"></path></svg>
<svg class="a" style="left:751px;top:113px;" width="44" height="35" viewBox="0 0 44 35"><path d="M32 10 L12 10 C6 10 2.5 14 2.5 20 C2.5 26 6 30.5 12 30.5 L16 30.5" stroke="#c0c1c4" stroke-width="7" fill="none"></path><path d="M43 10 L31 0 L31 20 Z" fill="#c0c1c4"></path><path d="M18 30.5 L35 30.5" stroke="#c0c1c4" stroke-width="7" stroke-dasharray="4 2.5"></path></svg>
<div class="a" style="left:813px;top:107px;width:1px;height:43px;background:#d4d6da"></div>
<svg class="a" style="left:832.5px;top:107.3px;" width="36" height="40" viewBox="0 0 36 40"><ellipse cx="18" cy="5.5" rx="4.1" ry="5.2" transform="rotate(0 18 5.5)" fill="#555"></ellipse><ellipse cx="30.9" cy="12.4" rx="4.1" ry="5.2" transform="rotate(59 30.9 12.4)" fill="#555"></ellipse><ellipse cx="30.9" cy="27" rx="4.1" ry="5.2" transform="rotate(118 30.9 27)" fill="#555"></ellipse><ellipse cx="18.5" cy="34.3" rx="4.1" ry="5.2" transform="rotate(178 18.5 34.3)" fill="#555"></ellipse><ellipse cx="5.800000000000001" cy="27.3" rx="4.1" ry="5.2" transform="rotate(239 5.800000000000001 27.3)" fill="#555"></ellipse><ellipse cx="5.199999999999999" cy="12.6" rx="4.1" ry="5.2" transform="rotate(-60 5.199999999999999 12.6)" fill="#555"></ellipse></svg>
<svg class="a" style="left:888px;top:105px;" width="46" height="46" viewBox="0 0 46 46"><rect x="0" y="0" width="15" height="15" fill="#dcdde0"></rect><rect x="31" y="0" width="15" height="15" fill="#dcdde0"></rect><rect x="0" y="31" width="15" height="15" fill="#dcdde0"></rect><rect x="31" y="31" width="15" height="15" fill="#dcdde0"></rect><rect x="9" y="9" width="28" height="28" fill="#f2f5fa" stroke="#c8c9cc" stroke-width="2.6" stroke-dasharray="4 2.4"></rect></svg>
<svg class="a" style="left:948.3px;top:102.3px;" width="50" height="50" viewBox="0 0 50 50"><path d="M27.3 8.3 L34 16.5 L42 25 C43 26.5 42.8 28.5 41.5 30.5 L32.5 40 C31.3 41.3 29.7 41.7 28 40.8 L10.6 30.5 Z" fill="url(#gbtn)" stroke="#333" stroke-width="1.2" stroke-linejoin="round"></path><path d="M25.5 10 L12.5 28" stroke="#333" stroke-width="1"></path><path d="M16 20.5 C10 23 5 27 4.3 33 C4 36 5 38 6.5 37.5 C8 37 8.5 33 10.5 30.8 L15.5 24.5 Z" fill="#3a3a3a"></path><path d="M24.3 21.7 L36.3 10.6" stroke="#333" stroke-width="4" stroke-linecap="round"></path><path d="M24.3 21.7 L36.3 10.6" stroke="#f4f4f4" stroke-width="1.6" stroke-linecap="round"></path><circle cx="35.5" cy="11" r="4.4" fill="none" stroke="#333" stroke-width="1.6"></circle><circle cx="24.5" cy="22" r="3" fill="none" stroke="#333" stroke-width="1.3"></circle></svg>
<svg class="a" style="left:1014px;top:108px;" width="39" height="39" viewBox="0 0 39 39"><path d="M13.76 28.49 A10.3 10.3 0 1 1 23.44 28.49" fill="none" stroke="#555" stroke-width="5.6"></path><path d="M11 24 L17.5 30.5 L9.5 31.5 Z M26 24 L19.5 30.5 L27.5 31.5 Z" fill="#555"></path><path d="M12.5 12.5 L5 5 M24.7 12.5 L33 5 M11 27 L5 33 M26.5 27 L33 33" stroke="#555" stroke-width="4.2"></path><path d="M0 1 L12 2 L1 13 Z M37 1 L25 2 L36 13 Z M0 37 L12 36 L1 25 Z M37 37 L25 36 L36 25 Z" fill="#555"></path></svg>
<div class="a" style="left:1074px;top:107px;width:1px;height:43px;background:#d4d6da"></div>
<svg class="a" style="left:1092px;top:111px;" width="42" height="33" viewBox="0 0 42 33"><rect x="4" y="6" width="29" height="22" fill="none" stroke="#c6c7ca" stroke-width="3" stroke-dasharray="3.5 2.5"></rect><path d="M2 31 L41 1" stroke="#c2c3c6" stroke-width="3.5"></path><path d="M4 33 L41 3" stroke="#f2f5fa" stroke-width="1"></path></svg>
<svg class="a" style="left:1156px;top:111px;" width="35" height="34" viewBox="0 0 35 34"><path d="M3 30 L3 2 L33 2" stroke="#c6c7ca" stroke-width="3" stroke-dasharray="4 2.5" fill="none"></path><path d="M2 30 L32 2" stroke="#c6c7ca" stroke-width="3" stroke-dasharray="4 2.5"></path><path d="M6 33.5 L34.5 5 L34.5 33.5 Z" fill="#c4c5c8"></path></svg>
<div class="a" style="left:1204px;top:104px;width:61px;height:48px;background:linear-gradient(#c2c4c8 0%,#d2d4d8 35%,#dfe1e4 70%,#d0d2d6 100%);border:1px solid #c0c2c6;border-radius:3px"></div>
<div class="a" style="left:1214px;top:108px;width:40px;height:40px;background:#b4b4b6"></div>
<div class="a" style="left:1217px;top:111px;width:34px;height:34px;background:#fff"></div>
<div class="a" style="left:1219.0px;top:113.0px;width:6px;height:6px;background:#5c5c5c"></div>
<div class="a" style="left:1227.2px;top:113.0px;width:6px;height:6px;background:#5c5c5c"></div>
<div class="a" style="left:1235.4px;top:113.0px;width:6px;height:6px;background:#5c5c5c"></div>
<div class="a" style="left:1243.6px;top:113.0px;width:6px;height:6px;background:#5c5c5c"></div>
<div class="a" style="left:1219.0px;top:121.2px;width:6px;height:6px;background:#5c5c5c"></div>
<div class="a" style="left:1243.6px;top:121.2px;width:6px;height:6px;background:#5c5c5c"></div>
<div class="a" style="left:1219.0px;top:129.4px;width:6px;height:6px;background:#5c5c5c"></div>
<div class="a" style="left:1243.6px;top:129.4px;width:6px;height:6px;background:#5c5c5c"></div>
<div class="a" style="left:1219.0px;top:137.6px;width:6px;height:6px;background:#5c5c5c"></div>
<div class="a" style="left:1227.2px;top:137.6px;width:6px;height:6px;background:#5c5c5c"></div>
<div class="a" style="left:1235.4px;top:137.6px;width:6px;height:6px;background:#5c5c5c"></div>
<div class="a" style="left:1243.6px;top:137.6px;width:6px;height:6px;background:#5c5c5c"></div>
<div class="a" style="left:1270px;top:97px;width:47px;height:61px;background:linear-gradient(#f4f6f9 0%,#eef0f3 55%,#d8d9dc 100%);border:1px solid #c4c5c8;border-radius:3px"></div>
<svg class="a" style="left:1276px;top:118px;" width="35" height="18" viewBox="0 0 35 18"><path d="M0 0 L35 0 L17.5 18 Z" fill="#5a5a5c"></path></svg>
<div class="a" style="left:1270px;top:161px;width:47px;height:36px;background:linear-gradient(#f4f6f9 0%,#eef0f3 55%,#d8d9dc 100%);border:1px solid #c4c5c8;border-radius:3px"></div>
<svg class="a" style="left:1280px;top:172px;" width="25" height="13" viewBox="0 0 25 13"><path d="M0 0 L25 0 L12.5 13 Z" fill="#5a5a5c"></path></svg>
<div class="a" style="left:1317px;top:96px;width:603px;height:41px;background:linear-gradient(#e8e8ea,#e2e2e4);border-bottom:1px solid #ababad"></div>
<div class="a" style="left:1325px;top:113px;width:1px;height:13px;background:#a8a8aa"></div>
<div class="a" style="left:1331px;top:113px;width:1px;height:13px;background:#a8a8aa"></div>
<div class="a" style="left:1337px;top:113px;width:1px;height:13px;background:#a8a8aa"></div>
<svg class="a" style="left:1901px;top:104px;" width="11" height="25" viewBox="0 0 11 25"><path d="M0 0 L11 12 L0 25 L2.5 12 Z" fill="#8c8c8e"></path></svg>
<div class="a" style="left:1317px;top:137px;width:603px;height:894px;background:#e6e6e8"></div>
<div class="a" style="left:1317px;top:137px;width:1px;height:894px;background:#a8a8aa"></div>
<div class="a" style="left:1319px;top:139px;width:522px;height:42px;background:linear-gradient(#e6e6e8 0%,#e2e2e4 60%,#d2d2d4 100%);border-top:1px solid #b8b8ba"></div>
<div class="a" style="left:1319px;top:139px;width:42px;height:42px;background:linear-gradient(#e9e9eb 0%,#e4e4e6 50%,#cfcfd1 100%);border-right:1px solid #b0b0b2;border-left:1px solid #b8b8ba;border-bottom:1px solid #b0b0b2"></div>
<svg class="a" style="left:1332px;top:153px;" width="16" height="16" viewBox="0 0 16 16"><path d="M0 0 L5 7 L0 14 Z" fill="#8a8a8c"></path><rect x="7" y="0" width="9" height="2.6" fill="#8a8a8c"></rect><rect x="7" y="6" width="9" height="2.6" fill="#8a8a8c"></rect><rect x="7" y="12" width="9" height="2.6" fill="#8a8a8c"></rect></svg>
<div class="a" style="left:1361px;top:149px;width:161px;height:33px;background:#f2f5fa;border:1px solid #b4b4b6;border-bottom:none"></div>
<div class="a" style="left:1522px;top:180px;width:319px;height:1px;background:#b0b0b2"></div>
<div class="a" style="left:1319px;top:181px;width:522px;height:10px;background:#f2f5fa"></div>
<div class="a" style="left:1319px;top:191px;width:522px;height:226px;background:#f2f5fa;border-top:1px solid #8c8c8e;border-left:1px solid #c0c0c2;border-bottom:2px solid #a4a4a6"></div>
<div class="a" style="left:1828px;top:192px;width:13px;height:223px;background:#d8d9dc;border-left:1px solid #c8c9cc"></div>
<svg class="a" style="left:1371px;top:152px;" width="36" height="30" viewBox="0 0 36 30"><defs><linearGradient id="gchk" x1="0" y1="0" x2="0" y2="1"><stop offset="0" stop-color="#9a9a9a" stop-opacity=".5"></stop><stop offset="1" stop-color="#fff" stop-opacity="0"></stop></linearGradient></defs><rect x="1" y="29" width="32" height="3" fill="url(#gchk)"></rect><rect x="0.3" y="22.6" width="31.7" height="6.4" fill="#3e3e3e"></rect><path d="M3.5 21.5 C7 19 10 19.5 12.5 22.5 C17 14 24 5 34.5 0.8 C27 5.5 19.5 14 13.5 26.5 C11 23.5 8 21.5 3.5 21.5 Z" fill="#e8101a"></path><path d="M34.5 0.8 C28 6 21 14 15.5 26 C21 16 28 8 36 3 Z" fill="#b0b0b0" opacity=".6"></path></svg>
<div class="a t s" style="color: rgb(30, 30, 30); font-size: 13.84px; line-height: 13.84px; top: 162.35px; left: 1411.58px; transform: scaleX(0.835); transform-origin: 0px 0px; white-space: pre;">レイヤープロパティ</div>
<div class="a t s" style="color: rgb(30, 30, 30); font-size: 12.99px; line-height: 12.99px; top: 195.09px; left: 1333.6px; transform: scaleX(1.1273); transform-origin: 0px 0px; white-space: pre;">効果</div>
<div class="a" style="left:1324px;top:202px;width:6px;height:1px;background:#d0d2d6"></div>
<div class="a" style="left:1368px;top:202px;width:455px;height:1px;background:#d0d2d6"></div>
<div class="a" style="left:1621px;top:212px;width:204px;height:48px;background:linear-gradient(#f6f8fa 0%,#eef0f3 55%,#d6d7da 100%);border:1px solid #a8a9ac;border-radius:3px"></div>
<svg class="a" style="left:1621px;top:212px;" width="204" height="48" viewBox="0 0 204 48"><circle cx="22" cy="23.8" r="14" fill="#fff"></circle><circle cx="22" cy="23.8" r="9.4" fill="#404040"></circle>
<circle cx="64" cy="26.8" r="14" fill="#6cb9f2"></circle><circle cx="67.8" cy="21.2" r="13.2" fill="none" stroke="#2a2a2a" stroke-width="1.1"></circle>
<g fill="#4a4a4a"><rect x="95.0" y="8.8" width="5.2" height="5.3"></rect><rect x="105.4" y="8.8" width="5.2" height="5.3"></rect><rect x="115.8" y="8.8" width="5.2" height="5.3"></rect><rect x="100.2" y="14.1" width="5.2" height="5.3"></rect><rect x="110.6" y="14.1" width="5.2" height="5.3"></rect><rect x="121.0" y="14.1" width="5.2" height="5.3"></rect><rect x="95.0" y="19.4" width="5.2" height="5.3"></rect><rect x="105.4" y="19.4" width="5.2" height="5.3"></rect><rect x="115.8" y="19.4" width="5.2" height="5.3"></rect><rect x="100.2" y="24.7" width="5.2" height="5.3"></rect><rect x="110.6" y="24.7" width="5.2" height="5.3"></rect><rect x="121.0" y="24.7" width="5.2" height="5.3"></rect><rect x="95.0" y="30.0" width="5.2" height="5.3"></rect><rect x="105.4" y="30.0" width="5.2" height="5.3"></rect><rect x="115.8" y="30.0" width="5.2" height="5.3"></rect><rect x="100.2" y="35.3" width="5.2" height="5.3"></rect><rect x="110.6" y="35.3" width="5.2" height="5.3"></rect><rect x="121.0" y="35.3" width="5.2" height="5.3"></rect></g>
<rect x="143" y="13" width="26.5" height="26.5" fill="#fff" stroke="#858585" stroke-width="1"></rect>
<rect x="138" y="8" width="26.5" height="26.5" fill="#7cd0ff" stroke="#62b4e6" stroke-width="1"></rect>
<path d="M175 17.7 L197.7 17.7 L186.3 30 Z" fill="#59595b"></path></svg>
<div class="a t s" style="color: rgb(30, 30, 30); font-size: 13.65px; line-height: 13.65px; top: 267.27px; left: 1333.71px; transform: scaleX(1.0585); transform-origin: 0px 0px; white-space: pre;">表現色</div>
<div class="a" style="left:1324px;top:274px;width:6px;height:1px;background:#d0d2d6"></div>
<div class="a" style="left:1384px;top:274px;width:439px;height:1px;background:#d0d2d6"></div>
<div class="a" style="left:1349px;top:290px;width:374px;height:48px;background:linear-gradient(#f6f8fa 0%,#eef0f3 55%,#d6d7da 100%);border:1px solid #b4b5b8;border-radius:3px"></div>
<div class="a" style="left:1481.5px;top:296px;width:11.5px;height:35px;background:#ff9a9a"></div>
<div class="a" style="left:1493px;top:296px;width:11.5px;height:35px;background:#9cd2ff"></div>
<div class="a" style="left:1504.5px;top:296px;width:11.5px;height:35px;background:#a8ff9c"></div>
<div class="a t s" style="color: rgb(30, 30, 30); font-size: 16.39px; line-height: 16.39px; top: 303.76px; left: 1525.07px; transform: scaleX(0.712); transform-origin: 0px 0px; white-space: pre;">カラー</div>
<svg class="a" style="left:1694px;top:308px;" width="23" height="12" viewBox="0 0 23 12"><path d="M0 0 L23 0 L11.5 12 Z" fill="#59595b"></path></svg>
<div class="a" style="left:1317px;top:417px;width:526px;height:3px;background:#e6e6e8"></div>
<div class="a" style="left:1319px;top:420px;width:522px;height:41px;background:linear-gradient(#e6e6e8 0%,#e2e2e4 60%,#d2d2d4 100%);border-top:1px solid #b8b8ba"></div>
<div class="a" style="left:1319px;top:420px;width:42px;height:41px;background:linear-gradient(#e9e9eb 0%,#e4e4e6 50%,#cfcfd1 100%);border-right:1px solid #b0b0b2;border-left:1px solid #b8b8ba;border-bottom:1px solid #b0b0b2"></div>
<svg class="a" style="left:1332px;top:433px;" width="16" height="16" viewBox="0 0 16 16"><path d="M0 0 L5 7 L0 14 Z" fill="#8a8a8c"></path><rect x="7" y="0" width="9" height="2.6" fill="#8a8a8c"></rect><rect x="7" y="6" width="9" height="2.6" fill="#8a8a8c"></rect><rect x="7" y="12" width="9" height="2.6" fill="#8a8a8c"></rect></svg>
<div class="a" style="left:1361px;top:429px;width:106px;height:33px;background:#f2f5fa;border:1px solid #b4b4b6;border-bottom:none"></div>
<div class="a" style="left:1467px;top:460px;width:374px;height:1px;background:#b0b0b2"></div>
<div class="a" style="left:1319px;top:461px;width:522px;height:570px;background:#f2f5fa"></div>
<svg class="a" style="left:1372px;top:435px;" width="30" height="26" viewBox="0 0 30 26"><path d="M1 4.5 L14 0.5 L29 4.5 L15 8.5 Z" fill="#c4c4c4" stroke="#2e2e2e" stroke-width="1"></path><path d="M1 13 L14 9 L29 13 L15 17 Z" fill="#e6e6e6" stroke="#2e2e2e" stroke-width="1"></path><path d="M1 21.5 L14 17.5 L29 21.5 L15 25.5 Z" fill="#fff" stroke="#2e2e2e" stroke-width="1"></path></svg>
<div class="a t s" style="color: rgb(30, 30, 30); font-size: 14.09px; line-height: 14.09px; top: 441.9px; left: 1411.94px; transform: scaleX(0.8427); transform-origin: 0px 0px; white-space: pre;">レイヤー</div>
<div class="a" style="left:1321px;top:471px;width:259px;height:48px;background:linear-gradient(#f6f8fa 0%,#eef0f3 55%,#d6d7da 100%);border:1px solid #b4b5b8;border-radius:3px"></div>
<svg class="a" style="left:1551px;top:488px;" width="23" height="13" viewBox="0 0 23 13"><path d="M0 0 L23 0 L11.5 13 Z" fill="#505052"></path></svg>
<div class="a" style="left:1592px;top:481px;width:177px;height:18px;border:1px solid #b8b8ba;background-color:#fff;background-image:linear-gradient(90deg,rgba(192,192,194,0) 0%,rgba(192,192,194,.5) 50%,rgba(192,192,194,1) 100%),linear-gradient(45deg,#c4c4c6 25%,transparent 25%,transparent 75%,#c4c4c6 75%),linear-gradient(45deg,#c4c4c6 25%,transparent 25%,transparent 75%,#c4c4c6 75%);background-size:100% 100%,10px 10px,10px 10px;background-position:0 0,0 0,5px 5px"></div>
<div class="a" style="left:1768px;top:471px;width:8px;height:40px;background:#d4d6da;border:1px solid #bcbec2;border-radius:1px"></div>
<div class="a t" style="color: rgb(17, 17, 17); font-size: 14.08px; line-height: 14.08px; top: 482.94px; left: 1785.24px; transform: scaleX(1.0771); transform-origin: 0px 0px; white-space: pre;">100</div>
<svg class="a" style="left:1822px;top:483px;" width="10" height="16" viewBox="0 0 10 16"><path d="M0 6 L9 6 L4.5 0 Z M0 9 L9 9 L4.5 15 Z" fill="#8c8c8e"></path></svg>
<svg class="a" style="left:1597px;top:526px;" width="29" height="37" viewBox="0 0 29 37"><path d="M6 15 L6 9.5 C6 4 9.5 1.5 14.5 1.5 C19.5 1.5 23 4 23 9.5 L23 15" fill="none" stroke="#555" stroke-width="4.2"></path><path d="M6 15 L6 9.5 C6 4 9.5 1.5 14.5 1.5 C19.5 1.5 23 4 23 9.5 L23 15" fill="none" stroke="#8a8a8a" stroke-width="1.5"></path><rect x="0.5" y="15" width="28" height="21.5" rx="1.5" fill="url(#glock)" stroke="#4a4a4a" stroke-width="1"></rect><circle cx="14" cy="22.5" r="2.8" fill="#fff"></circle><rect x="12.3" y="23" width="3.4" height="8.5" fill="#fff"></rect><circle cx="14" cy="22.5" r="1.9" fill="#222"></circle><rect x="13.1" y="23.5" width="1.8" height="7" fill="#222"></rect></svg>
<svg class="a" style="left:1649px;top:526px;" width="36" height="39" viewBox="0 0 36 39"><path d="M6 10 L6 7 C6 3 8.5 1 11.5 1 C14.5 1 17 3 17 7 L17 10" fill="none" stroke="#3a3a3a" stroke-width="2.3"></path><rect x="1" y="10" width="20" height="16.5" fill="url(#gbtn)" stroke="#3a3a3a" stroke-width="1.2"></rect><circle cx="11" cy="16" r="1.8" fill="#222"></circle><rect x="10.2" y="16.5" width="1.6" height="5" fill="#222"></rect><rect x="15" y="19.5" width="19.5" height="19" fill="#fff" stroke="#333" stroke-width="1.3"></rect><rect x="15.6" y="20.1" width="9.3" height="9.2" fill="#9a9a9a"></rect><rect x="24.9" y="29.3" width="9.3" height="9.2" fill="#9a9a9a"></rect><rect x="19" y="20.1" width="5" height="9" fill="#c8c8c8" opacity=".6"></rect></svg>
<div class="a" style="left:1695px;top:522px;width:72px;height:47px;background:linear-gradient(#f6f8fa,#eef0f3 60%,#e4e5e8);border:1px solid #d0d1d4;border-radius:3px"></div>
<svg class="a" style="left:1703px;top:528px;" width="60" height="38" viewBox="0 0 60 38"><rect x="0" y="0" width="25" height="26" fill="#d6d7da"></rect><path d="M3 14 C4 11 7 12 8 13 C9 10 12 10 13 12 C15 9 18 7 19 10 L19 21 L4 21 Z" fill="#f4f4f4" stroke="#c8c8c8" stroke-dasharray="1 1" stroke-width=".8"></path><path d="M22 23 L32 33 M32 23 L22 33" stroke="#c8c8ca" stroke-width="3"></path><path d="M35 12 L56 12 L45.5 24 Z" fill="#c4c5c8"></path></svg>
<div class="a" style="left:1770px;top:522px;width:71px;height:47px;background:linear-gradient(#f6f8fa,#eef0f3 60%,#e4e5e8);border:1px solid #d0d1d4;border-radius:3px"></div>
<svg class="a" style="left:1776px;top:526px;" width="62" height="40" viewBox="0 0 62 40"><path d="M3 3 L33 3 L3 37 Z" fill="#e6e7ea" stroke="#c4c5c8" stroke-width="2"></path><path d="M9 10 L19 10 L9 21 Z" fill="#f4f6f9" stroke="#c4c5c8" stroke-width="1.5"></path><path d="M21 26 L31 36 M31 26 L21 36" stroke="#c8c8ca" stroke-width="3"></path><path d="M37 12 L58 12 L47.5 24 Z" fill="#c4c5c8"></path></svg>
<div class="a" style="left:1319px;top:572px;width:510px;height:406px;background:#f4f6fa;border-top:1px solid #8e8e90"></div>
<div class="a" style="left:1319px;top:573px;width:509px;height:57px;background:linear-gradient(#dae8f4 0%,#d6e5f2 50%,#c9dbea 100%);border-bottom:1px solid #a8b2bc"></div>
<div class="a" style="left:1319px;top:685px;width:509px;height:1px;background:#a4a4a6"></div>
<div class="a" style="left:1828px;top:573px;width:13px;height:405px;background:#d8d9dc;border-left:1px solid #c4c5c8"></div>
<div class="a" style="left:1319px;top:977px;width:522px;height:1px;background:#b4b5b8"></div>
<div class="a" style="left:1319px;top:978px;width:522px;height:50px;background:#f2f5fa"></div>
<div class="a" style="left:1319px;top:1028px;width:524px;height:3px;background:#d6d7da;border-top:1px solid #a8a8aa"></div>
<div class="a" style="left:1841px;top:420px;width:2px;height:611px;background:#b8b8ba"></div>
<svg class="a" style="left:1580px;top:986px;" width="26" height="31" viewBox="0 0 26 31"><path d="M12 1 L23 6 L12 11 L1 6 Z" fill="none" stroke="#c8c8ca" stroke-width="1.5"></path><path d="M1 20 L12 15 L23 20 L12 30 Z" fill="#d0d1d4"></path><path d="M10 6 L10 17 L6 17 L12 24 L18 17 L14 17 L14 6 Z" fill="#c4c5c8"></path></svg>
<svg class="a" style="left:1628px;top:986px;" width="34" height="31" viewBox="0 0 34 31"><path d="M1 8 L17 1 L33 8 L33 10 L1 10 Z" fill="#4a4a4a"></path><path d="M1 10 L1 23 L17 30 L33 23 L33 10" fill="none" stroke="#777" stroke-width="2" stroke-dasharray="3 2"></path><path d="M1 23 L17 17 L33 23 L17 30 Z" fill="#f0f0f0" stroke="#777" stroke-width="1.5"></path><path d="M13.5 5 L20.5 5 L20.5 16 L25 16 L17 25 L9 16 L13.5 16 Z" fill="#2e2e2e" stroke="#f2f5fa" stroke-width=".8"></path></svg>
<svg class="a" style="left:1681px;top:988px;" width="41" height="29" viewBox="0 0 41 29"><defs><linearGradient id="gmask" x1="0" x2="1"><stop offset="0" stop-color="#d8d8d8"></stop><stop offset="1" stop-color="#5a5a5a"></stop></linearGradient></defs><rect x="0.5" y="0.5" width="40" height="27.5" fill="url(#gmask)" stroke="#3a3a3a" stroke-width="1"></rect><circle cx="20.5" cy="13.8" r="8.2" fill="#fff" stroke="#333" stroke-width="1"></circle></svg>
<svg class="a" style="left:1737px;top:985px;" width="41" height="35" viewBox="0 0 41 35"><path d="M10 1 L14 1 L14 26 L20 26 L12 34 L3 26 L10 26 Z" fill="#c8c9cc"></path><path d="M16 4 L26 0.5 L39 16 L28 20 Z" fill="#d8d9dc" stroke="#c8c9cc" stroke-width="1"></path><ellipse cx="25" cy="10" rx="3.5" ry="2.3" fill="#f2f5fa"></ellipse><path d="M20 25 L33 21 L36 28 L24 32 Z" fill="#eef0f3" stroke="#c8c9cc" stroke-width="1"></path></svg>
<svg class="a" style="left:1796px;top:982px;" width="34" height="41" viewBox="0 0 34 41"><path d="M4 14 L8 38 C9 40 25 40 26 38 L30 14 Z" fill="#f8f8f8" stroke="#3a3a3a" stroke-width="1.3"></path><path d="M11 18 L12 37 M15 18 L15.5 38 M19 18 L18.5 38 M23 18 L22 37" stroke="#aaa" stroke-width="1"></path><path d="M1 11 C1 8 4 7 17 7 C30 7 33 8 33 11 L33 14 C33 16 30 17 17 17 C4 17 1 16 1 14 Z" fill="#f4f4f4" stroke="#3a3a3a" stroke-width="1.3"></path><path d="M10 8 C10 3 13 1 17 1 C21 1 24 3 24 8" fill="none" stroke="#3a3a3a" stroke-width="3"></path><path d="M10 8 C10 3 13 1 17 1 C21 1 24 3 24 8" fill="none" stroke="#f4f4f4" stroke-width="1"></path></svg>
<div class="a" style="left:1321px;top:519px;width:260px;height:510px;background:#f4f6fa;border:1px solid #8c8c8e;box-shadow:2px 2px 2px rgba(0,0,0,.25)"></div>
<div class="a" style="left:1567px;top:520px;width:13px;height:508px;background:#f0f2f5;border-left:1px solid #c8c9cc"></div>
<div class="a" style="left:1578px;top:520px;width:2px;height:508px;background:#a0a0a2"></div>
<div class="a" style="left:1570px;top:722px;width:6px;height:1px;background:#8a8a8a"></div>
<div class="a" style="left:1570px;top:725px;width:6px;height:1px;background:#8a8a8a"></div>
<div class="a" style="left:1570px;top:728px;width:6px;height:1px;background:#8a8a8a"></div>
<div class="a" style="left:1323px;top:522px;width:243px;height:36px;background:linear-gradient(#d6e6f4 0%,#d2e3f2 55%,#c4daed 100%);border:1px solid #b4cbe0;border-radius:3px"></div>
<div class="a" style="left:1567px;top:930px;width:12px;height:98px;background:#d8d9dc;border-left:1px solid #c8c9cc"></div>
<div class="a t" style="left: 1330.5px; top: 530px; font-size: 14px; line-height: 16px; color: rgb(0, 0, 0); display: inline-block; white-space: pre; transform: scaleX(1.0714); transform-origin: 0px 0px;">通常</div>
<div class="a t" style="left: 1330.5px; top: 569px; font-size: 14px; line-height: 16px; color: rgb(0, 0, 0); display: inline-block; white-space: pre; transform: scaleX(1.0715); transform-origin: 0px 0px;">比較(暗)</div>
<div class="a t" style="left: 1330.5px; top: 608px; font-size: 14px; line-height: 16px; color: rgb(0, 0, 0); display: inline-block; white-space: pre; transform: scaleX(1.0714); transform-origin: 0px 0px;">乗算</div>
<div class="a t" style="left: 1330.5px; top: 647px; font-size: 14px; line-height: 16px; color: rgb(0, 0, 0); display: inline-block; white-space: pre; transform: scaleX(0.9173); transform-origin: 0px 0px;">焼き込みカラー</div>
<div class="a t" style="left: 1330.5px; top: 686px; font-size: 14px; line-height: 16px; color: rgb(0, 0, 0); display: inline-block; white-space: pre; transform: scaleX(0.9038); transform-origin: 0px 0px;">焼き込み(リニア)</div>
<div class="a t" style="left: 1330.5px; top: 725px; font-size: 14px; line-height: 16px; color: rgb(0, 0, 0); display: inline-block; white-space: pre; transform: scaleX(1.0714); transform-origin: 0px 0px;">減算</div>
<div class="a t" style="left: 1330.5px; top: 764px; font-size: 14px; line-height: 16px; color: rgb(0, 0, 0); display: inline-block; white-space: pre; transform: scaleX(1.0813); transform-origin: 0px 0px;">比較(明)</div>
<div class="a t" style="left: 1329.5px; top: 803px; font-size: 14px; line-height: 16px; color: rgb(0, 0, 0); display: inline-block; white-space: pre; transform: scaleX(0.7643); transform-origin: 0px 0px;">スクリーン</div>
<div class="a t" style="left: 1330.5px; top: 842px; font-size: 14px; line-height: 16px; color: rgb(0, 0, 0); display: inline-block; white-space: pre; transform: scaleX(0.9071); transform-origin: 0px 0px;">覆い焼きカラー</div>
<div class="a t" style="left: 1330.5px; top: 881px; font-size: 14px; line-height: 16px; color: rgb(0, 0, 0); display: inline-block; white-space: pre; transform: scaleX(1.0233); transform-origin: 0px 0px;">覆い焼き(発光)</div>
<div class="a t" style="left: 1330.5px; top: 920px; font-size: 14px; line-height: 16px; color: rgb(0, 0, 0); display: inline-block; white-space: pre; transform: scaleX(1.0714); transform-origin: 0px 0px;">加算</div>
<div class="a t" style="left: 1330.5px; top: 959px; font-size: 14px; line-height: 16px; color: rgb(0, 0, 0); display: inline-block; white-space: pre; transform: scaleX(1.0868); transform-origin: 0px 0px;">加算(発光)</div>
<div class="a t" style="left: 1329.5px; top: 998px; font-size: 14px; line-height: 16px; color: rgb(0, 0, 0); display: inline-block; white-space: pre; transform: scaleX(0.8333); transform-origin: 0px 0px;">オーバーレイ</div>
<div class="a t" style="color: rgb(0, 0, 0); font-size: 14.21px; line-height: 14.21px; top: 485.77px; left: 1422.2px; transform: scaleX(1.0651); transform-origin: 0px 0px; white-space: pre;">通常</div>
<div class="a" style="left:1843px;top:137px;width:77px;height:894px;background:#e6e6e8;border-left:1px solid #c8c8ca"></div>
<div class="a" style="left:1845px;top:138px;width:72px;height:205px;background:linear-gradient(90deg,#dcdde0,#d4d5d8);border:1px solid #bdbec1;border-bottom:2px solid #b0b1b4"></div>
<svg class="a" style="left:1855px;top:153px;" width="50" height="39" viewBox="0 0 50 39"><rect x="14.5" y="10.5" width="33" height="26.5" fill="#ececee" stroke="#a4a4a6" stroke-width="3"></rect><rect x="1.5" y="1.5" width="33" height="27" fill="#eaeaec" stroke="#7c7c7e" stroke-width="3.2" rx="1.5"></rect></svg>
<svg class="a" style="left:1858px;top:218px;" width="46" height="46" viewBox="0 0 46 46"><path d="M23 4 C36 4 44 11 44 23 C44 35 36 43 23 43 C10 43 4 35 4 23 C4 11 10 4 23 4 Z" fill="#bcbcbe"></path><path d="M21 1 C34 1 41 8 41 20.5 C41 33 34 40 21 40 C8 40 1.5 33 1.5 20.5 C1.5 8 8 1 21 1 Z" fill="#8c8c8e"></path><circle cx="21" cy="12" r="5.2" fill="#e8e8ea"></circle><path d="M15.5 20 C15.5 18.5 16.5 18 18 18 L24 18 C25.5 18 26.5 19 26.5 20.5 L26.5 29 C26.5 31 28 32.5 31 33.5 L15.5 33.5 Z" fill="#e8e8ea"></path></svg>
<svg class="a" style="left:1855px;top:282px;" width="51" height="50" viewBox="0 0 51 50"><rect x="0" y="0" width="51" height="50" fill="#ececee"></rect><path d="M26 0 L51 0 L51 50 L18 50 Z" fill="#a0a0a2"></path><path d="M13 36 C6 33 4 24 8 17 C11 12 17 10 22 11" stroke="#909092" stroke-width="6" fill="none"></path><path d="M18 2 L30 13 L18 22 Z" fill="#909092"></path><path d="M38 14 C45 17 47 26 43 33 C40 38 34 40 29 39" stroke="#ececee" stroke-width="6" fill="none"></path><path d="M33 48 L21 37 L33 28 Z" fill="#ececee"></path><path d="M14 37 L20 37" stroke="#ececee" stroke-width="2" stroke-dasharray="1.5 1"></path><path d="M31 13 L37 13" stroke="#a0a0a2" stroke-width="2" stroke-dasharray="1.5 1"></path></svg>
<div class="a" style="left:1844px;top:348px;width:73px;height:139px;background:linear-gradient(90deg,#dedfe2,#c6c7ca);border:1px solid #bdbec1"></div>
<svg class="a" style="left:1844px;top:355px" width="66" height="60"><path d="M0 0 L60 0 L66 5 L66 54 L60 60 L0 60 Z" fill="#f2f4f8" stroke="#c8c9cc" stroke-width="1"></path></svg>
<svg class="a" style="left:1844px;top:421px" width="66" height="59"><path d="M0 0 L60 0 L66 5 L66 53 L60 59 L0 59 Z" fill="#f2f4f8" stroke="#c8c9cc" stroke-width="1"></path></svg>
<svg class="a" style="left:1855px;top:359px;" width="55" height="48" viewBox="0 0 55 48"><defs><linearGradient id="gchk2" x1="0" y1="0" x2="0" y2="1"><stop offset="0" stop-color="#9a9a9a" stop-opacity=".45"></stop><stop offset="1" stop-color="#fff" stop-opacity="0"></stop></linearGradient></defs><rect x="2" y="45.5" width="48" height="4" fill="url(#gchk2)"></rect><rect x="1" y="35.3" width="49" height="10.2" fill="#434343"></rect><path d="M5 27.5 C10 24 15 25 19.5 30 C27 17 38 7 53 1.5 C42 8.5 31 20 22 39 C18.5 34 13 28.5 5 27.5 Z" fill="#e8101a"></path><path d="M53 1.5 C43 9 33 20 25 37 C33 23 43 12 55 5 Z" fill="#b8b8b8" opacity=".6"></path></svg>
<svg class="a" style="left:1856px;top:429px;" width="45" height="40" viewBox="0 0 45 40"><path d="M1 6.5 L24 0.5 L44 6.5 L21 12.5 Z" fill="#c4c4c4" stroke="#222" stroke-width="1.3"></path><path d="M1 20 L24 14 L44 20 L21 26 Z" fill="#e4e4e4" stroke="#222" stroke-width="1.3"></path><path d="M1 33 L24 27 L44 33 L21 39 Z" fill="#fff" stroke="#222" stroke-width="1.3"></path></svg>
<div class="a" style="left:1845px;top:492px;width:72px;height:73px;background:#d8d9dc;border:1px solid #b4b5b8;border-bottom:2px solid #a8a9ac"></div>
<svg class="a" style="left:1859px;top:508px;" width="43" height="42" viewBox="0 0 43 42"><defs><linearGradient id="gclap" x1="0" y1="0" x2="1" y2="1"><stop offset="0" stop-color="#b4b4b6"></stop><stop offset="1" stop-color="#7e7e80"></stop></linearGradient></defs><path d="M0 10 L39 0 L41 6 L2 16 Z" fill="#8a8a8c"></path><path d="M5 9 L10 14 M13 7 L18 12 M21 5 L26 10 M29 3 L34 8" stroke="#e6e6e8" stroke-width="3"></path><rect x="2" y="14" width="40" height="28" fill="url(#gclap)" stroke="#8a8a8c" stroke-width="1"></rect><rect x="2" y="14" width="40" height="6" fill="#8a8a8c"></rect><path d="M6 14 L10 20 M14 14 L18 20 M22 14 L26 20 M30 14 L34 20" stroke="#e6e6e8" stroke-width="3"></path></svg>
<div class="a" style="left:1845px;top:570px;width:72px;height:73px;background:#d8d9dc;border:1px solid #b4b5b8;border-bottom:2px solid #a8a9ac"></div>
<svg class="a" style="left:1858px;top:591px;" width="44" height="38" viewBox="0 0 44 38"><defs><radialGradient id="gcam" cx=".4" cy=".35"><stop offset="0" stop-color="#e8e8e8"></stop><stop offset="1" stop-color="#808082"></stop></radialGradient></defs><path d="M1 4 L4 1 L17 1 L20 5 L36 5 L36 32 L1 32 Z" fill="#dcdcde" stroke="#c4c4c6" stroke-width="1.2"></path><path d="M1 32 L16 13 L36 13" fill="none" stroke="#c8c8ca" stroke-width="1.2"></path><circle cx="31" cy="27" r="11" fill="#8a8a8c"></circle><circle cx="31" cy="27" r="8.2" fill="url(#gcam)" stroke="#e6e6e8" stroke-width="1.2"></circle></svg>
<svg class="a" style="left:0;top:1031px" width="1920" height="49" viewBox="0 0 1920 49">
<defs>
<filter id="noise" x="0" y="0" width="1" height="1"><feTurbulence type="fractalNoise" baseFrequency=".35" numOctaves="2" seed="3"></feTurbulence><feColorMatrix values="0 0 0 0 0.45  0 0 0 0 0.33  0 0 0 0 0.2  0 0 0 -2.2 1.1"></feColorMatrix></filter>
<linearGradient id="tbl" x1="0" x2="1"><stop offset="0" stop-color="#7e5c3c"></stop><stop offset=".35" stop-color="#86643f"></stop><stop offset=".6" stop-color="#7a5838"></stop><stop offset="1" stop-color="#7c5a3a"></stop></linearGradient>
<linearGradient id="swirl" x1="0" x2="1"><stop offset="0" stop-color="#6a4a2c" stop-opacity="0"></stop><stop offset=".3" stop-color="#684828"></stop><stop offset=".7" stop-color="#6e4e2e"></stop><stop offset="1" stop-color="#8a6a48" stop-opacity=".5"></stop></linearGradient>
</defs>
<rect x="0" y="0" width="727" height="49" fill="url(#tbl)"></rect>
<rect x="0" y="0" width="727" height="49" filter="url(#noise)" opacity=".2"></rect>
<path d="M580 0 L700 0 C690 15 690 35 700 49 L600 49 C585 30 585 15 580 0 Z" fill="url(#swirl)" opacity=".8"></path>
<path d="M640 49 C630 35 630 15 650 0" stroke="#9a7a58" stroke-width="3" fill="none" opacity=".18"></path>
<path d="M693 49 C685 30 688 12 700 0" stroke="#a08060" stroke-width="2" fill="none" opacity=".2"></path>
<rect x="725" y="0" width="2" height="49" fill="#5e4630"></rect>
<rect x="727" y="0" width="198" height="49" fill="#876c52"></rect>
<rect x="925" y="0" width="12" height="49" fill="#6e5438"></rect>
<rect x="929" y="0" width="2" height="49" fill="#5a4430"></rect>
<rect x="937" y="0" width="296" height="49" fill="#a07c66"></rect>
<rect x="937" y="0" width="296" height="3" fill="#86705e"></rect>
<rect x="937" y="3" width="296" height="6" fill="#6e5438"></rect>
<path d="M985 42 L1002 49 L985 49 Z" fill="#c8aa8a"></path>
<rect x="1233" y="0" width="687" height="49" fill="#6e5438"></rect>
<rect x="1236" y="0" width="297" height="5" fill="#b08a66"></rect>
<rect x="1694" y="0" width="26" height="49" fill="#7e6448"></rect>
<path d="M1700 40 L1706 46 L1712 40" stroke="#8a7258" stroke-width="2" fill="none"></path>
<linearGradient id="tbr" x1="0" x2="1"><stop offset="0" stop-color="#70533a"></stop><stop offset=".5" stop-color="#74563a"></stop><stop offset="1" stop-color="#82603e"></stop></linearGradient><rect x="1720" y="0" width="200" height="49" fill="url(#tbr)"></rect><rect x="1720" y="0" width="200" height="49" filter="url(#noise)" opacity=".25"></rect>
</svg>
<div class="a" style="left:62px;top:1033px;width:62px;height:46px;background:rgba(200,170,140,.28);border:1px solid #bf9f80"></div>
<div class="a" style="left:125px;top:1033px;width:5px;height:46px;border:1px solid #b09070;border-left:none;background:rgba(200,170,140,.2)"></div>
<div class="a" style="left:135px;top:1033px;width:64px;height:46px;background:rgba(200,170,140,.28);border:1px solid #bf9f80"></div>
<div class="a" style="left:200px;top:1033px;width:5px;height:46px;border:1px solid #b09070;border-left:none;background:rgba(200,170,140,.2)"></div>
<div class="a" style="left:281px;top:1033px;width:69px;height:46px;background:rgba(230,205,180,.42);border:1px solid #eedccb"></div>
<div class="a" style="left:353px;top:1033px;width:65px;height:46px;background:rgba(200,170,140,.28);border:1px solid #bf9f80"></div>
<div class="a" style="left:419px;top:1033px;width:5px;height:46px;border:1px solid #b09070;border-left:none;background:rgba(200,170,140,.2)"></div>
<div class="a" style="left:426px;top:1033px;width:71px;height:46px;background:rgba(200,170,140,.28);border:1px solid #bf9f80"></div>
<svg class="a" style="left:13px;top:1038px;" width="34" height="35" viewBox="0 0 34 35"><path d="M1 5 L15 3.3 L15 16 L1 16 Z M17 3 L33 0.5 L33 16 L17 16 Z M1 18 L15 18 L15 30.5 L1 29 Z M17 18 L33 18 L33 34.5 L17 31 Z" fill="#fff"></path></svg>
<svg class="a" style="left:72px;top:1035px;" width="40" height="40" viewBox="0 0 40 40"><defs><radialGradient id="gie" cx=".45" cy=".4" r=".6"><stop offset="0" stop-color="#9fe8ff"></stop><stop offset=".6" stop-color="#3cb4ee"></stop><stop offset="1" stop-color="#1a7ec8"></stop></radialGradient></defs><path d="M35 23 L12 23 C12 29 16 32 21 32 C25 32 28 30 30 27 L35 27 C32 34 27 37 21 37 C13 37 6 31 6 21.5 C6 12 13 6 21 6 C30 6 36 12 35 23 Z M12 18 L29.5 18 C29 13 25.5 10.5 21 10.5 C16.5 10.5 13 13 12 18 Z" fill="url(#gie)"></path><path d="M4 36 C-1 34 5 22 17 12 C27 4 37 -1 39 3 C40 5 38 9 34 13" stroke="#f4c020" stroke-width="3" fill="none"></path></svg>
<svg class="a" style="left:147px;top:1036px;" width="40" height="40" viewBox="0 0 40 40"><defs><linearGradient id="gfold" x1="0" y1="0" x2="0" y2="1"><stop offset="0" stop-color="#fff2b0"></stop><stop offset="1" stop-color="#f0c860"></stop></linearGradient><linearGradient id="gfb" x1="0" y1="0" x2="0" y2="1"><stop offset="0" stop-color="#a8dcf8"></stop><stop offset="1" stop-color="#3a9ad8"></stop></linearGradient></defs><path d="M1 5 C1 3 2 2 4 2 L16 2 L19 6 L37 6 C38 6 39 7 39 8 L39 37 L1 37 Z" fill="url(#gfold)" stroke="#d8b060" stroke-width=".8"></path><rect x="5" y="1" width="5" height="4" fill="#60a040"></rect><rect x="14" y="4" width="5" height="4" fill="#d04020"></rect><rect x="24" y="7" width="12" height="4" fill="#fff"></rect><rect x="24" y="7" width="3" height="4" fill="#2080c0"></rect><path d="M6 37 L6 24 C6 22 8 21 10 21 L30 21 C32 21 34 22 34 24 L34 37 L27 37 L27 29 L13 29 L13 37 Z" fill="url(#gfb)" stroke="#3080b8" stroke-width=".8"></path></svg>
<svg class="a" style="left:222px;top:1036px;" width="38" height="36" viewBox="0 0 38 36"><path d="M2 30 L14 18 L34 24 L22 36 Z" fill="#5a5a5a" stroke="#333" stroke-width=".8"></path><path d="M14 18 L18 5 L36 10 L34 24 Z" fill="#2a2a2a" stroke="#888" stroke-width="1"></path><path d="M16 17 L19 7 L34 11 L32 22 Z" fill="#4a4a4a"></path><circle cx="28" cy="8" r="7.5" fill="#d8d8d8" stroke="#999" stroke-width="2" stroke-dasharray="2 1.4"></circle><circle cx="28" cy="8" r="3" fill="#888"></circle></svg>
<div class="a" style="left:296px;top:1037px;width:36px;height:37px;background:linear-gradient(#ffffff,#f4f4f4 50%,#d4d4d4);box-shadow:1px 1px 1px rgba(0,0,0,.35)"></div>
<svg class="a" style="left:298px;top:1040px;" width="32" height="32" viewBox="0 0 32 32"><path d="M7 17 C3 12 6 6 13 5 C20 4 27 6 27 11 C27 17 18 18 13 16 C10 15 11 11 15 11 C19 11 22 14 20 18 C18 22 15 24 16 30" stroke="#1e1e1e" stroke-width="4.2" fill="none" stroke-linecap="round"></path></svg>
<svg class="a" style="left:366px;top:1037px;" width="42" height="40" viewBox="0 0 42 40"><defs><linearGradient id="gpal" x1="0" y1="0" x2="1" y2="1"><stop offset="0" stop-color="#e8f6ff"></stop><stop offset="1" stop-color="#80b8e0"></stop></linearGradient></defs><path d="M3 24 C0 14 9 6 20 6 C30 6 36 11 36 18 C36 26 30 34 20 35 C16 35.5 14 33 15 30 C16 27 13 25 10 27 C6 30 4 28 3 24 Z" fill="url(#gpal)" stroke="#8ab0cc" stroke-width=".8"></path><circle cx="9" cy="19" r="3" fill="#e03030"></circle><circle cx="15" cy="12" r="3" fill="#50c040"></circle><circle cx="24" cy="10" r="3" fill="#f0b020"></circle><circle cx="14" cy="21" r="1.8" fill="#9a7a5a"></circle><path d="M12 40 L34 6" stroke="#e8901a" stroke-width="2.6"></path><path d="M32 8 L38 0 L41 3 L35 10 Z" fill="#d8b070"></path></svg>
<div class="a" style="left:442px;top:1037px;width:36px;height:37px;background:linear-gradient(#ffffff,#f4f4f4 50%,#d4d4d4);box-shadow:1px 1px 1px rgba(0,0,0,.35)"></div>
<svg class="a" style="left:443px;top:1050px;" width="34" height="12" viewBox="0 0 34 12"><rect x="1" y="1" width="32" height="10" rx="5" fill="#eaf8fa" stroke="#18a0b0" stroke-width="2"></rect><text x="17" y="9.5" text-anchor="middle" font-family="Liberation Sans" font-weight="bold" font-size="9.5" fill="#1aa4b4">CLIP</text></svg>
<svg class="a" style="left:1628px;top:1046px;" width="39" height="23" viewBox="0 0 39 23"><rect x="1" y="1" width="37" height="21" rx="2" fill="none" stroke="#fff" stroke-width="2"></rect><rect x="4.0" y="4.0" width="3.2" height="3.2" fill="#fff"></rect><rect x="8.6" y="4.0" width="3.2" height="3.2" fill="#fff"></rect><rect x="13.2" y="4.0" width="3.2" height="3.2" fill="#fff"></rect><rect x="17.8" y="4.0" width="3.2" height="3.2" fill="#fff"></rect><rect x="22.4" y="4.0" width="3.2" height="3.2" fill="#fff"></rect><rect x="27.0" y="4.0" width="3.2" height="3.2" fill="#fff"></rect><rect x="31.6" y="4.0" width="3.2" height="3.2" fill="#fff"></rect><rect x="4.0" y="8.8" width="3.2" height="3.2" fill="#fff"></rect><rect x="8.6" y="8.8" width="3.2" height="3.2" fill="#fff"></rect><rect x="13.2" y="8.8" width="3.2" height="3.2" fill="#fff"></rect><rect x="17.8" y="8.8" width="3.2" height="3.2" fill="#fff"></rect><rect x="22.4" y="8.8" width="3.2" height="3.2" fill="#fff"></rect><rect x="27.0" y="8.8" width="3.2" height="3.2" fill="#fff"></rect><rect x="31.6" y="8.8" width="3.2" height="3.2" fill="#fff"></rect><rect x="4.0" y="13.6" width="3.2" height="3.2" fill="#fff"></rect><rect x="8.6" y="13.6" width="3.2" height="3.2" fill="#fff"></rect><rect x="13.2" y="13.6" width="3.2" height="3.2" fill="#fff"></rect><rect x="17.8" y="13.6" width="3.2" height="3.2" fill="#fff"></rect><rect x="22.4" y="13.6" width="3.2" height="3.2" fill="#fff"></rect><rect x="27.0" y="13.6" width="3.2" height="3.2" fill="#fff"></rect><rect x="31.6" y="13.6" width="3.2" height="3.2" fill="#fff"></rect><rect x="9" y="17" width="21" height="3" fill="#fff"></rect></svg>
<svg class="a" style="left:1684px;top:1050px;" width="10" height="6" viewBox="0 0 10 6"><path d="M0 6 L5 0 L10 6 Z" fill="#fff"></path></svg>
<svg class="a" style="left:1711px;top:1046px;" width="22" height="22" viewBox="0 0 22 22"><path d="M1 7 L6 7 L11 2 L11 20 L6 15 L1 15 Z" fill="#f4f4f4" stroke="#ddd" stroke-width=".5"></path><path d="M14 7 C16 9 16 13 14 15 M17 4 C21 8 21 14 17 18" stroke="#f4f4f4" stroke-width="1.4" fill="none"></path></svg>
<svg class="a" style="left:1742px;top:1048px;" width="18" height="18" viewBox="0 0 18 18"><rect x="1" y="13" width="2.5" height="4" fill="#fff"></rect><rect x="5" y="10" width="2.5" height="7" fill="#fff"></rect><rect x="9" y="6" width="2.5" height="11" fill="#fff"></rect><rect x="13" y="1" width="2.5" height="16" fill="#fff"></rect></svg>
<div class="a t" style="color: rgb(255, 255, 255); font-size: 23.19px; line-height: 23.19px; top: 1045.37px; left: 1776px; transform: scaleX(0.9655); transform-origin: 0px 0px; white-space: pre;">A</div>
<div class="a t" style="color: rgb(255, 255, 255); font-size: 16.2px; line-height: 16.2px; top: 1038.63px; left: 1837.83px; transform: scaleX(1.0721); transform-origin: 0px 0px; white-space: pre;">6:55</div>
<div class="a t" style="color: rgb(255, 255, 255); font-size: 15.27px; line-height: 15.27px; top: 1060.72px; left: 1811.63px; transform: scaleX(1.134); transform-origin: 0px 0px; white-space: pre;">2013/12/12</div>

</body></html>
